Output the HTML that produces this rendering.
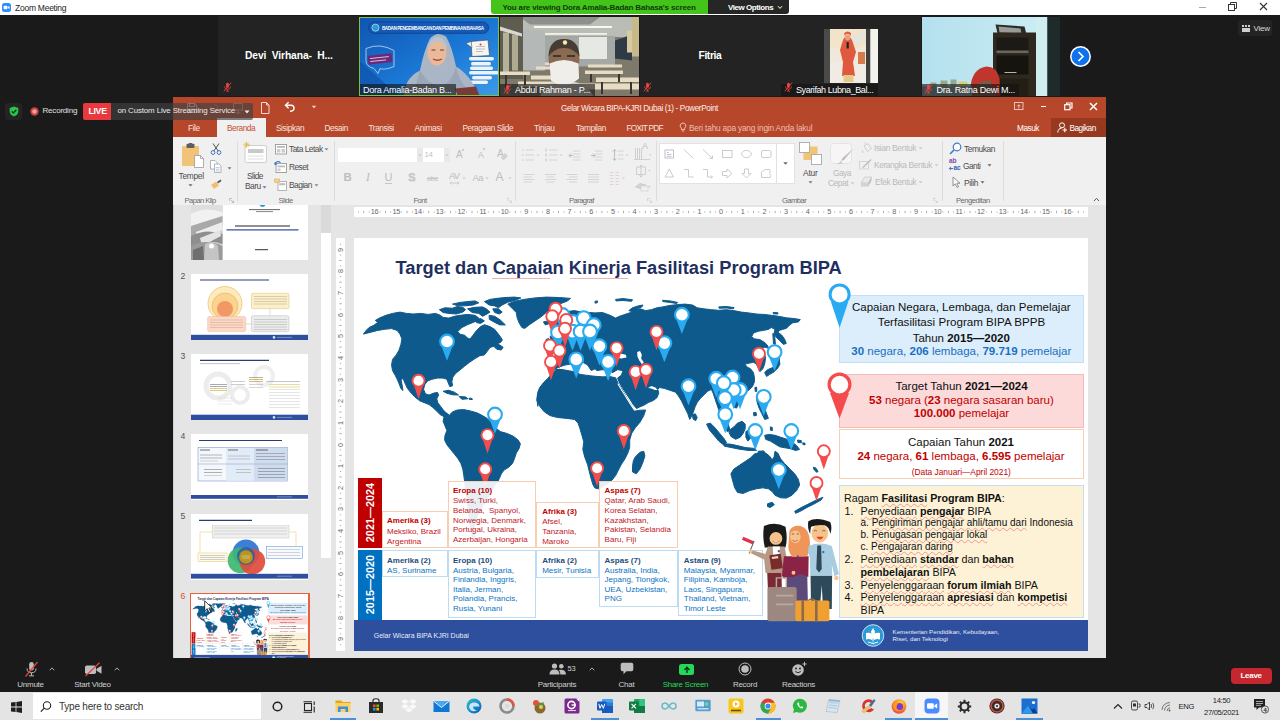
<!DOCTYPE html>
<html>
<head>
<meta charset="utf-8">
<title>Zoom Meeting</title>
<style>
*{box-sizing:border-box;margin:0;padding:0}
html,body{width:1280px;height:720px;overflow:hidden;background:#1a1a1a;font-family:"Liberation Sans",sans-serif;}
.abs{position:absolute}
#root{position:relative;width:1280px;height:720px;overflow:hidden;background:#1a1a1a}
.t{position:absolute;white-space:nowrap;line-height:1}
/* title bar */
#titlebar{left:0;top:0;width:1280px;height:15px;background:#fff}
/* tiles */
.tile{position:absolute;top:16px;height:80px;background:#232323;overflow:hidden}
.tname{position:absolute;color:#fff;font-weight:bold;font-size:10.300px;letter-spacing:-.12px;white-space:nowrap;line-height:1}
.tlabel{position:absolute;left:0;bottom:.5px;height:12px;background:rgba(20,20,20,.62);color:#fff;font-size:9px;line-height:12.500px;padding:0 0 0 15px;white-space:nowrap;letter-spacing:-.25px;overflow:hidden}
/* ppt */
#ppt{left:173px;top:97px;width:933px;height:561px;background:#e6e6e6;overflow:hidden}
#ppttitle{left:0;top:0;width:933px;height:21px;background:#b7472a}
#ppttabs{left:0;top:21px;width:933px;height:19px;background:#b7472a}
#ribbon{left:0;top:40px;width:933px;height:69px;background:#f3f3f3;border-bottom:1px solid #d6d6d6}
.tab{position:absolute;top:0;height:19px;line-height:21px;color:#f6e3de;font-size:8.3px;white-space:nowrap;letter-spacing:-.035em}
.rl{position:absolute;font-size:8.3px;color:#4c4c4c;white-space:nowrap;line-height:1;letter-spacing:-.05em}
.rd{color:#b9b9b9}
.sep{position:absolute;top:141px;width:1px;height:60px;background:#dcdcdc}
.rg{position:absolute;top:197px;font-size:7.6px;color:#6a6a6a;white-space:nowrap;line-height:1;letter-spacing:-.035em}

.rn{position:absolute;top:208px;width:12px;text-align:center;font-size:7.3px;color:#6a6a6a;line-height:8px;letter-spacing:-.04em}
.vn{position:absolute;left:334.5px;width:12px;height:12px;text-align:center;font-size:7.3px;color:#6a6a6a;line-height:12px;transform:rotate(-90deg);letter-spacing:-.04em}
.tn{position:absolute;left:180.5px;font-size:8.6px;color:#555;line-height:1}
.th{position:absolute;left:191px;width:117px;height:66px;background:#fff;overflow:hidden}
.sq{text-decoration:underline wavy rgba(235,90,90,.55);text-decoration-thickness:.5px;text-underline-offset:1.2px;text-decoration-skip-ink:none}
/* zoom toolbar */
#ztb{left:0;top:658px;width:1280px;height:34px;background:#1a1a1a}
.zl{position:absolute;top:22.500px;font-size:8px;color:#cfcfcf;white-space:nowrap;line-height:1;text-align:center;letter-spacing:-.28px}
/* taskbar */
#taskbar{left:0;top:692px;width:1280px;height:28px;background:#e4e4e4}
</style>
</head>
<body>
<div id="root">

<!-- ===== title bar ===== -->
<div id="titlebar" class="abs">
  <svg class="abs" style="left:2px;top:3px" width="9" height="9" viewBox="0 0 9 9"><rect width="9" height="9" rx="2.5" fill="#2d8cff"/><rect x="1.6" y="2.8" width="3.8" height="3.4" rx=".8" fill="#fff"/><path d="M5.8 4 L7.5 2.9 V6.1 L5.8 5Z" fill="#fff"/></svg>
  <div class="t" style="left:15px;top:4px;font-size:8.500px;color:#222;letter-spacing:-.25px">Zoom Meeting</div>
  <div class="abs" style="left:491px;top:0;width:217px;height:14px;background:#44c31a;border-radius:0 0 0 3px"></div>
  <div class="t" style="left:502.500px;top:3.500px;font-size:8px;font-weight:bold;color:#0e3d0a;letter-spacing:-.16px">You are viewing Dora Amalia-Badan Bahasa's screen</div>
  <div class="abs" style="left:708px;top:0;width:81px;height:14px;background:#262626;border-radius:0 0 3px 0"></div>
  <div class="t" style="left:728px;top:3.500px;font-size:8px;font-weight:bold;color:#fff;letter-spacing:-.45px">View Options</div>
  <svg class="abs" style="left:777px;top:5px" width="6" height="5" viewBox="0 0 6 5"><path d="M1 1.2 L3 3.4 L5 1.2" fill="none" stroke="#fff" stroke-width="1"/></svg>
  <!-- window controls -->
  <div class="abs" style="left:1199px;top:6.500px;width:7px;height:1.400px;background:#a8a8a8"></div>
  <svg class="abs" style="left:1228px;top:2px" width="9" height="9" viewBox="0 0 9 9"><rect x=".5" y="2.5" width="6" height="6" fill="none" stroke="#333" stroke-width="1"/><path d="M2.5 2.5 V.5 H8.5 V6.5 H6.5" fill="none" stroke="#333" stroke-width="1"/></svg>
  <svg class="abs" style="left:1259px;top:2px" width="9" height="9" viewBox="0 0 9 9"><path d="M1 1 L8 8 M8 1 L1 8" stroke="#333" stroke-width="1.1"/></svg>
</div>

<!-- ===== video strip ===== -->
<div id="tiles">
  <div class="tile" style="left:218px;width:140.500px">
    <div class="tname" style="left:27px;top:50.500px;top:34.500px">Devi&nbsp; Virhana-&nbsp; H...</div>
    <svg class="abs" style="left:5px;top:66px" width="9" height="10" viewBox="0 0 9 10"><rect x="3" y=".8" width="3" height="5" rx="1.500" fill="#e8433f"/><path d="M1.500 4.500 Q1.500 7.300 4.500 7.300 Q7.500 7.300 7.500 4.500 M4.500 7.300 V9 M3 9.200 H6" fill="none" stroke="#e8433f" stroke-width=".8"/><path d="M.8 9.300 L8.200 .7" stroke="#e8433f" stroke-width=".9"/></svg>
  </div>
  <div class="tile" id="tile2" style="left:359px;width:140px;top:16.500px;height:79.500px;background:#1766c2">
    <svg class="abs" style="left:0;top:0" width="140" height="80" viewBox="359 16.500 140 80">
      <defs><linearGradient id="tg2" x1="0" y1="0" x2="1" y2="1"><stop offset="0" stop-color="#0f55b0"/><stop offset=".55" stop-color="#1b78d6"/><stop offset="1" stop-color="#3e9be8"/></linearGradient></defs>
      <rect x="359" y="16.500" width="140" height="80" fill="url(#tg2)"/>
      <path d="M359 60 L400 96 H359Z" fill="#0d4ea6" opacity=".6"/>
      <rect x="368.600" y="21.500" width="120" height="11.300" rx="5.600" fill="#1559b4" stroke="#0c3f8e" stroke-width=".8"/>
      <circle cx="375.500" cy="27.200" r="3.600" fill="#2b9bd8" stroke="#fff" stroke-width=".5"/>
      <text x="382" y="29" font-family="Liberation Sans" font-weight="bold" font-size="4.600" fill="#fff" textLength="102">BADAN PENGEMBANGAN DAN PEMBINAAN BAHASA</text>
      <!-- left bubble -->
      <path d="M366 48 Q380 42 394 50 L394 66 Q384 70 380 68 L378 73 L374 68 Q366 66 366 60Z" fill="none" stroke="#dfe8f5" stroke-width=".7"/>
      <rect x="368" y="54" width="24" height="9" rx="1" fill="#6a2a7a" transform="rotate(-6 380 58)"/>
      <path d="M370 57 H389 M370 60 H386" stroke="#f3d9f5" stroke-width=".8" transform="rotate(-6 380 58)"/>
      <!-- right paper + pills -->
      <path d="M471 41 L488 39.500 L489.500 55 L472 56Z" fill="#f4f4f4" stroke="#444" stroke-width=".6"/>
      <path d="M466 43 L471 41 L472 47Z" fill="#eee" stroke="#444" stroke-width=".4"/>
      <path d="M476 46 H485 M476 48.500 H485 M476 51 H483" stroke="#999" stroke-width=".6"/>
      <circle cx="480.500" cy="44" r="1" fill="#d33"/>
      <g fill="#eef3fa"><rect x="469" y="56.500" width="25" height="3.600" rx="1.800"/><rect x="471" y="61.500" width="20" height="3.400" rx="1.700"/><rect x="470" y="66" width="23" height="3.400" rx="1.700"/><rect x="469" y="70.500" width="30" height="3.600" rx="1.800"/><rect x="472" y="75.500" width="20" height="3.400" rx="1.700"/><rect x="470" y="80" width="18" height="3.400" rx="1.700"/></g>
      <!-- person -->
      <path d="M404 96.500 Q404 78 420 70 Q424 50 430 38 Q437 30 446 36 Q452 46 456 66 Q470 74 480 96.500Z" fill="#aab6c6"/>
      <path d="M420 70 Q428 84 440 86 Q452 82 456 66 Q458 80 470 92 L476 96.500 H412 Z" fill="#9aa7b9"/>
      <ellipse cx="437" cy="52" rx="9.600" ry="13" fill="#e9b99a"/>
      <path d="M427 50 Q429 37 437.500 36.500 Q446 37 447.500 50 Q443 41 437.500 41 Q432 41 427 50Z" fill="#b9c3d0"/>
      <path d="M433 58.500 Q437.500 61 442 58.500" fill="none" stroke="#a8443f" stroke-width="1.300"/>
      <path d="M431.500 49.500 h4 M440 49.500 h4" stroke="#4a3a33" stroke-width=".9"/>
      <path d="M455 88 L476 86 L480 96.500 H458Z" fill="#7a3a3a"/>
    </svg>
    <div class="tlabel" style="width:97px;padding-left:4px">Dora Amalia-Badan B...</div>
    <div class="abs" style="left:0;top:0;width:140px;height:79.500px;border:1px solid #7dc242"></div>
  </div>
  <div class="tile" id="tile3" style="left:500px;width:139px;top:16.500px;height:79.500px;background:#8a8576">
    <svg class="abs" style="left:0;top:0" width="139" height="80" viewBox="500 16.500 139 80">
      <rect x="500" y="16.500" width="139" height="80" fill="#7d7a6c"/>
      <path d="M500 16.500 H639 V38 L610 36 H548 L522 34 V16.500Z" fill="#b9bdb6"/>
      <path d="M520 16.500 H600 L590 24 H530Z" fill="#8c918d"/>
      <rect x="500" y="16.500" width="23" height="62" fill="#5f5d50"/>
      <rect x="503" y="32" width="6" height="40" fill="#b5b29a"/><rect x="512" y="34" width="6" height="36" fill="#aeab92"/>
      <path d="M500 26 L522 33 V36 L500 30Z" fill="#d8d8d0"/>
      <rect x="523" y="30" width="22" height="40" fill="#b4b8b6"/>
      <rect x="545" y="36" width="70" height="30" fill="#a4a9a6"/>
      <rect x="534" y="25.500" width="78" height="2" fill="#f8f8f2"/><rect x="545" y="32.500" width="62" height="1.800" fill="#f2f2ea"/>
      <rect x="579" y="36.500" width="28" height="22" fill="#e6e8e4"/>
      <path d="M615 40 L632 34 V60 L615 58Z" fill="#2e3b46"/>
      <path d="M632 16.500 H639 V56 H632Z" fill="#c8b98a"/>
      <rect x="627" y="30" width="5" height="22" fill="#d9c9a0"/>
      <g fill="#e8dcc4"><rect x="500" y="71" width="30" height="3.500"/><rect x="531" y="75" width="34" height="4"/><rect x="518" y="81" width="40" height="5"/><rect x="536" y="66" width="28" height="3"/><rect x="585" y="70" width="38" height="3.500"/><rect x="596" y="77" width="43" height="4.500"/><rect x="580" y="83" width="59" height="6"/><rect x="545" y="62" width="25" height="2.500"/><rect x="588" y="64" width="34" height="3"/></g>
      <g fill="#3a3530"><rect x="505" y="74.500" width="2" height="12"/><rect x="524" y="74.500" width="2" height="10"/><rect x="601" y="81.500" width="2" height="12"/><rect x="630" y="81.500" width="2" height="12"/><rect x="590" y="73.500" width="2" height="8"/><rect x="618" y="73.500" width="2" height="8"/></g>
      <path d="M540 96.500 Q543 84 556 81 H574 Q588 84 594 96.500Z" fill="#cfccc3"/>
      <ellipse cx="564" cy="58" rx="15.500" ry="19" fill="#8a6a52"/>
      <path d="M548.500 56 Q549 38.500 564 38.500 Q579 38.500 579.500 56 Q573 47 564 47.500 Q555 47 548.500 56Z" fill="#463c33"/>
      <path d="M549.500 63 Q564 56 578.500 63 L579 78 Q565 90 551 80Z" fill="#efeeea"/>
      <path d="M553 55.500 h8 M567 55.500 h8" stroke="#2a2420" stroke-width="1.400"/>
      <circle cx="565" cy="42" r="2.200" fill="#f6e8b0"/>
    </svg>
    <div class="tlabel" style="width:95px">Abdul Rahman - P...</div>
    <svg class="abs" style="left:2.5px;top:67.5px" width="9" height="10" viewBox="0 0 9 10"><rect x="3" y=".8" width="3" height="5" rx="1.500" fill="#e8433f"/><path d="M1.500 4.500 Q1.500 7.300 4.500 7.300 Q7.500 7.300 7.500 4.500 M4.500 7.300 V9 M3 9.200 H6" fill="none" stroke="#e8433f" stroke-width=".8"/><path d="M.8 9.300 L8.200 .7" stroke="#e8433f" stroke-width=".9"/></svg>
  </div>
  <div class="tile" style="left:640px;width:140.500px">
    <div class="tname" style="left:58.500px;top:34.500px;letter-spacing:-.4px">Fitria</div>
    <svg class="abs" style="left:3px;top:66px" width="9" height="10" viewBox="0 0 9 10"><rect x="3" y=".8" width="3" height="5" rx="1.500" fill="#e8433f"/><path d="M1.500 4.500 Q1.500 7.300 4.500 7.300 Q7.500 7.300 7.500 4.500 M4.500 7.300 V9 M3 9.200 H6" fill="none" stroke="#e8433f" stroke-width=".8"/><path d="M.8 9.300 L8.200 .7" stroke="#e8433f" stroke-width=".9"/></svg>
  </div>
  <div class="tile" id="tile5" style="left:781px;width:139.500px">
    <svg class="abs" style="left:43px;top:13px" width="54" height="54" viewBox="824 29 54 54">
      <rect x="824" y="29" width="54" height="54" fill="#efe9dc"/>
      <rect x="824" y="29" width="6" height="54" fill="#4a4a48"/><rect x="866" y="29" width="4.500" height="54" fill="#3e3e3c"/><rect x="870.500" y="29" width="7.500" height="54" fill="#f4f2ec"/>
      <path d="M830 29 H866 V45 L848 52 L830 46Z" fill="#f1e4c8"/>
      <path d="M850 36 L866 30 V42 L852 46Z" fill="#e9e4da"/>
      <rect x="830" y="62" width="36" height="21" fill="#f0ece4"/>
      <rect x="858" y="52" width="7" height="12" fill="#d97a4a"/>
      <path d="M843 40 Q847 32 852 40 L856 52 L853 62 L855 76 H842 L843 62 L840 50Z" fill="#e0583e"/>
      <ellipse cx="847.600" cy="37.500" rx="2.600" ry="3" fill="#e9a080"/>
      <path d="M844.500 36 Q847.600 31.500 850.700 36 L851 33 Q847.600 30 844.300 33Z" fill="#e0583e"/>
      <rect x="846.600" y="42" width="2.200" height="6.500" rx=".6" fill="#222"/>
      <rect x="843.500" y="75" width="10" height="7" fill="#e6c88a"/>
    </svg>
    <div class="tlabel" style="width:97px;letter-spacing:-.42px">Syarifah Lubna_Bal...</div>
    <svg class="abs" style="left:3px;top:66px" width="9" height="10" viewBox="0 0 9 10"><rect x="3" y=".8" width="3" height="5" rx="1.500" fill="#e8433f"/><path d="M1.500 4.500 Q1.500 7.300 4.500 7.300 Q7.500 7.300 7.500 4.500 M4.500 7.300 V9 M3 9.200 H6" fill="none" stroke="#e8433f" stroke-width=".8"/><path d="M.8 9.300 L8.200 .7" stroke="#e8433f" stroke-width=".9"/></svg>
  </div>
  <div class="tile" id="tile6" style="left:921.500px;width:138.500px;top:16.500px;height:79.500px;background:#1b2626">
    <svg class="abs" style="left:0;top:0" width="139" height="80" viewBox="921.500 16.500 139 80">
      <defs><linearGradient id="tg6" x1="0" y1="0" x2="1" y2="0"><stop offset="0" stop-color="#b4e0ee"/><stop offset="1" stop-color="#c8ecf2"/></linearGradient></defs>
      <rect x="921.500" y="16.500" width="114" height="80" fill="url(#tg6)"/>
      <rect x="1035.500" y="16.500" width="11.500" height="80" fill="#cfeef0"/>
      <rect x="1047" y="16.500" width="14" height="80" fill="#1d2b2a"/>
      <path d="M995 24 L1024 26 L1026 34 L997 33Z" fill="#2a2a28"/><path d="M998 26 L1020 28 L1021 33 L999 32Z" fill="#9a9a96"/>
      <rect x="992.500" y="32" width="43" height="64.500" fill="#2f281e"/>
      <rect x="996" y="37" width="32" height="14" fill="#1c1a16"/><path d="M996 50 H1028 V52.500 H996Z" fill="#6a665c"/>
      <rect x="996" y="55" width="32" height="19" fill="#15140f"/><path d="M1004 72 h12" stroke="#ddd" stroke-width=".8"/>
      <rect x="996" y="78" width="32" height="18" fill="#241e16"/>
      <path d="M970 86 Q972 68 986 66 Q996 66 999 78 L1000 96.500 H972Z" fill="#c0362c"/>
      <path d="M972 90 Q980 78 990 80 L996 96.500 H972Z" fill="#7a5a48"/>
      <g fill="#9aa88a"><rect x="930" y="82" width="6" height="5"/><rect x="940" y="80" width="7" height="7"/><rect x="950" y="79" width="6" height="8"/><rect x="958" y="81" width="9" height="6" fill="#d6cf7a"/></g>
      <rect x="921.500" y="86" width="50" height="10.500" fill="#8aa0a0"/>
    </svg>
    <div class="tlabel" style="width:97px">Dra. Ratna Dewi M...</div>
    <svg class="abs" style="left:2.5px;top:67.5px" width="9" height="10" viewBox="0 0 9 10"><rect x="3" y=".8" width="3" height="5" rx="1.500" fill="#e8433f"/><path d="M1.500 4.500 Q1.500 7.300 4.500 7.300 Q7.500 7.300 7.500 4.500 M4.500 7.300 V9 M3 9.200 H6" fill="none" stroke="#e8433f" stroke-width=".8"/><path d="M.8 9.300 L8.200 .7" stroke="#e8433f" stroke-width=".9"/></svg>
  </div>
  <!-- next arrow -->
  <svg class="abs" style="left:1070px;top:45.500px" width="21" height="21" viewBox="0 0 21 21"><circle cx="10.500" cy="10.500" r="9.700" fill="#0e72ed" stroke="#fff" stroke-width="1.500"/><path d="M8.500 6 L13 10.500 L8.500 15" fill="none" stroke="#fff" stroke-width="1.700"/></svg>
  <!-- View button -->
  <div class="abs" style="left:1238px;top:20px;width:34px;height:16px;background:#242424;border-radius:3px"></div>
  <svg class="abs" style="left:1242px;top:24.500px" width="8" height="7" viewBox="0 0 8 7"><g fill="#cfcfcf"><rect x="0" y="0" width="2" height="2"/><rect x="3" y="0" width="2" height="2"/><rect x="6" y="0" width="2" height="2"/><rect x="0" y="3" width="8" height="4"/></g></svg>
  <div class="t" style="left:1253.500px;top:24.500px;font-size:8px;color:#d8d8d8;letter-spacing:-.2px">View</div>
</div>

<!-- ===== zoom overlay: recording / live ===== -->
<div class="abs" style="left:5px;top:102.500px;width:16.500px;height:17px;background:#242424;border-radius:3px"></div>
<svg class="abs" style="left:8.500px;top:105.500px" width="10" height="11" viewBox="0 0 10 11"><path d="M5 .5 L9.300 2 V5.500 Q9.300 8.800 5 10.500 Q.7 8.800 .7 5.500 V2Z" fill="#27c64a"/><path d="M2.800 5.400 L4.400 7 L7.300 3.800" fill="none" stroke="#1a1a1a" stroke-width="1.200"/></svg>
<svg class="abs" style="left:30px;top:106.500px" width="9" height="9" viewBox="0 0 9 9"><circle cx="4.500" cy="4.500" r="4.200" fill="#c9403c"/><circle cx="4.500" cy="4.500" r="2.300" fill="#f0a09c"/></svg>
<div class="t" style="left:42.500px;top:107px;font-size:8px;color:#e0e0e0;letter-spacing:-.2px">Recording</div>

<!-- ===== powerpoint window ===== -->
<div id="ppt" class="abs">
  <div id="pc" class="abs" style="left:-173px;top:-97px;width:1280px;height:720px">
  <div class="abs" style="left:173px;top:97px;width:933px;height:40px;background:#b7472a"></div>
  <div class="abs" style="left:173px;top:137px;width:933px;height:68px;background:#f1f0f1"></div>
  
  <!-- quick access toolbar -->
  <svg class="abs" style="left:186px;top:101px" width="60" height="14" viewBox="0 0 60 14">
    <g fill="none" stroke="#f3d9d2" stroke-width="1">
      <path d="M1.5 2.5 H9 L10.5 4 V11.5 H1.5Z"/><rect x="3.5" y="2.5" width="5" height="3"/><rect x="3.5" y="8" width="5" height="3.5"/>
      <path d="M28 3.5 a4 4 0 1 1 -3 1.2" stroke="#c98674"/>
      <rect x="47.5" y="2.5" width="9" height="6.5" stroke="#d9a596"/><path d="M52 9 V12 M49.5 12 H54.5" stroke="#d9a596"/>
    </g>
  </svg>
  <svg class="abs" style="left:260px;top:101px" width="12" height="14" viewBox="0 0 12 14"><path d="M1.5 1.5 H6.5 L9 4 V12.5 H1.5Z M6.5 1.5 V4 H9" fill="none" stroke="#f3d9d2" stroke-width="1"/></svg>
  <svg class="abs" style="left:284px;top:101px" width="12" height="12" viewBox="0 0 12 12"><path d="M2 4.2 H7 a3 3 0 0 1 0 6 H6" fill="none" stroke="#fff" stroke-width="1.4"/><path d="M4.6 1.2 L1.5 4.2 L4.6 7.2" fill="none" stroke="#fff" stroke-width="1.4"/></svg>
  <svg class="abs" style="left:311px;top:105px" width="6" height="4" viewBox="0 0 6 4"><path d="M.8 .8 L3 3.2 L5.2 .8Z" fill="#f3d9d2"/></svg>
  <div class="t" style="left:561px;top:105px;font-size:8.2px;color:#fbeee9;letter-spacing:-.37px">Gelar Wicara BIPA-KJRI Dubai (1) - PowerPoint</div>
  <!-- window controls -->
  <svg class="abs" style="left:1014px;top:102px" width="10" height="9" viewBox="0 0 10 9"><rect x=".5" y=".5" width="8.5" height="7" fill="none" stroke="#e9c3b8" stroke-width="1"/><path d="M4.8 6.5 V3 M3.2 4.3 L4.8 2.7 L6.4 4.3" fill="none" stroke="#e9c3b8" stroke-width="1"/></svg>
  <div class="abs" style="left:1041px;top:106px;width:5px;height:1.4px;background:#fff"></div>
  <svg class="abs" style="left:1064px;top:102px" width="9" height="9" viewBox="0 0 9 9"><rect x=".7" y="2.7" width="5.3" height="5" fill="none" stroke="#fff" stroke-width="1.2"/><path d="M2.6 2.6 V1 H8 V6 H6.2" fill="none" stroke="#fff" stroke-width="1.2"/></svg>
  <svg class="abs" style="left:1089px;top:102px" width="9" height="9" viewBox="0 0 9 9"><path d="M1 1 L8 8 M8 1 L1 8" stroke="#fff" stroke-width="1.5"/></svg>

  
  <div class="abs" style="left:217px;top:118px;width:49px;height:19px;background:#f1f0f1"></div>
  <div class="abs" style="left:1051px;top:118px;width:55px;height:19px;background:#96391f"></div>
  <div class="tab" style="left:188px;top:118px;letter-spacing:-0.394px">File</div>
  <div class="tab" style="left:227px;top:118px;color:#c4502f;letter-spacing:-0.468px">Beranda</div>
  <div class="tab" style="left:276px;top:118px;letter-spacing:-0.409px">Sisipkan</div>
  <div class="tab" style="left:324.5px;top:118px;letter-spacing:-0.405px">Desain</div>
  <div class="tab" style="left:368.5px;top:118px;letter-spacing:-0.431px">Transisi</div>
  <div class="tab" style="left:414.5px;top:118px;letter-spacing:-0.331px">Animasi</div>
  <div class="tab" style="left:462.5px;top:118px;letter-spacing:-0.439px">Peragaan Slide</div>
  <div class="tab" style="left:534px;top:118px;letter-spacing:-0.283px">Tinjau</div>
  <div class="tab" style="left:576px;top:118px;letter-spacing:-0.402px">Tampilan</div>
  <div class="tab" style="left:626.5px;top:118px;letter-spacing:-0.765px">FOXIT PDF</div>
  <svg class="abs" style="left:679px;top:122px" width="8" height="11" viewBox="0 0 8 11"><path d="M4 1 a2.8 2.8 0 0 1 1.6 5.1 V7.6 H2.4 V6.1 A2.8 2.8 0 0 1 4 1Z M2.8 9 H5.2" fill="none" stroke="#efcfc6" stroke-width=".9"/></svg>
  <div class="tab" style="left:689px;top:118px;color:#eebfb3;letter-spacing:-0.191px">Beri tahu apa yang ingin Anda lakul</div>
  <div class="tab" style="left:1017px;top:118px;color:#fff;letter-spacing:-0.508px">Masuk</div>
  <svg class="abs" style="left:1057px;top:122px" width="11" height="11" viewBox="0 0 11 11"><circle cx="5" cy="3.3" r="2.5" fill="none" stroke="#fff" stroke-width="1"/><path d="M.8 10.5 C.8 7.5 2.5 6.3 4.5 6.3" fill="none" stroke="#fff" stroke-width="1"/><path d="M7.8 5.8 V10.2 M5.6 8 H10" stroke="#fff" stroke-width="1.1"/></svg>
  <div class="tab" style="left:1069.5px;top:118px;color:#fff;letter-spacing:-0.526px">Bagikan</div>

  
  <!-- separators -->
  <div class="sep" style="left:237px"></div><div class="sep" style="left:334px"></div><div class="sep" style="left:515px"></div><div class="sep" style="left:656px"></div><div class="sep" style="left:942px"></div><div class="sep" style="left:1003px"></div>
  <!-- group labels -->
  <div class="rg" style="left:184.5px;letter-spacing:-0.543px">Papan Klip</div>
  <div class="rg" style="left:278.5px;letter-spacing:-0.550px">Slide</div>
  <div class="rg" style="left:413.5px;letter-spacing:-0.550px">Font</div>
  <div class="rg" style="left:569px;letter-spacing:-0.550px">Paragraf</div>
  <div class="rg" style="left:782px;letter-spacing:-0.550px">Gambar</div>
  <div class="rg" style="left:956px;letter-spacing:-0.469px">Pengeditan</div>
  <!-- dialog launchers -->
  <svg class="abs" style="left:229px;top:198px" width="5" height="5" viewBox="0 0 5 5"><path d="M.5 3 V.5 H3 M2 2 L4.5 4.5 M4.5 2.6 V4.5 H2.6" fill="none" stroke="#aaa" stroke-width=".7"/></svg>
  <svg class="abs" style="left:507px;top:198px" width="5" height="5" viewBox="0 0 5 5"><path d="M.5 3 V.5 H3 M2 2 L4.5 4.5 M4.5 2.6 V4.5 H2.6" fill="none" stroke="#ccc" stroke-width=".7"/></svg>
  <svg class="abs" style="left:647px;top:198px" width="5" height="5" viewBox="0 0 5 5"><path d="M.5 3 V.5 H3 M2 2 L4.5 4.5 M4.5 2.6 V4.5 H2.6" fill="none" stroke="#ccc" stroke-width=".7"/></svg>
  <svg class="abs" style="left:933px;top:198px" width="5" height="5" viewBox="0 0 5 5"><path d="M.5 3 V.5 H3 M2 2 L4.5 4.5 M4.5 2.6 V4.5 H2.6" fill="none" stroke="#ccc" stroke-width=".7"/></svg>
  <svg class="abs" style="left:1093px;top:197px" width="7" height="5" viewBox="0 0 7 5"><path d="M1 4 L3.5 1.3 L6 4" fill="none" stroke="#555" stroke-width="1"/></svg>

  <!-- Papan Klip -->
  <svg class="abs" style="left:181px;top:143px" width="24" height="25" viewBox="0 0 24 25">
    <rect x="1" y="3" width="17" height="20" rx="1" fill="#f0c378"/><rect x="5.5" y=".8" width="8" height="4.2" rx="1" fill="#5f5f5f"/><rect x="7.6" y="0" width="3.8" height="2.4" rx="1" fill="#5f5f5f"/>
    <path d="M13.5 12.5 H19.5 L22.5 15.5 V24.5 H13.5Z" fill="#fff" stroke="#9a9a9a" stroke-width=".8"/><path d="M19.5 12.5 V15.5 H22.5" fill="none" stroke="#9a9a9a" stroke-width=".8"/>
  </svg>
  <div class="rl" style="left:178.5px;top:172px;font-size:8.4px;letter-spacing:-0.283px">Tempel</div>
  <svg class="abs" style="left:188px;top:184px" width="5" height="3" viewBox="0 0 5 3"><path d="M.5 .3 L2.5 2.6 L4.5 .3Z" fill="#666"/></svg>
  <svg class="abs" style="left:210px;top:143px" width="12" height="12" viewBox="0 0 12 12"><path d="M3 .5 L8.2 8 M9 .5 L3.8 8" stroke="#555" stroke-width="1" fill="none"/><circle cx="3" cy="9.5" r="1.9" fill="none" stroke="#3b76c4" stroke-width="1"/><circle cx="9" cy="9.5" r="1.9" fill="none" stroke="#3b76c4" stroke-width="1"/></svg>
  <svg class="abs" style="left:210px;top:160px" width="12" height="13" viewBox="0 0 12 13"><path d="M.5 .5 H5 L7 2.5 V9 H.5Z" fill="#fff" stroke="#9aa4ad" stroke-width=".8"/><path d="M4.5 4 H9 L11 6 V12.5 H4.5Z" fill="#fff" stroke="#9aa4ad" stroke-width=".8"/><path d="M5.8 7.5 H9.6 M5.8 9.2 H9.6 M5.8 10.9 H9.6" stroke="#8fa9c6" stroke-width=".6"/></svg>
  <svg class="abs" style="left:227px;top:167px" width="5" height="3" viewBox="0 0 5 3"><path d="M.5 .3 L2.5 2.6 L4.5 .3Z" fill="#777"/></svg>
  <svg class="abs" style="left:210px;top:179px" width="12" height="11" viewBox="0 0 12 11"><path d="M1 6 L6 2.5 L9 6.5 L4 10Z" fill="#eec069"/><path d="M7 3 L10.5 .6 L11.5 2 L8 4.5Z" fill="#555"/></svg>

  <!-- Slide -->
  <svg class="abs" style="left:243px;top:141px" width="25" height="24" viewBox="0 0 25 24">
    <rect x="2" y="4.5" width="21.5" height="17" rx="1.5" fill="#fdfdfd" stroke="#c9c9c9" stroke-width=".9"/><rect x="5" y="8" width="15.5" height="4" fill="#c9c9c9"/><path d="M5 15 H20.5 M5 18 H20.5" stroke="#dcdcdc" stroke-width=".9"/>
    <path d="M3.5 .5 V7 M.3 3.7 H6.8 M1.2 1.4 L5.8 6 M5.8 1.4 L1.2 6" stroke="#e9b645" stroke-width=".8"/>
  </svg>
  <div class="rl" style="left:247px;top:172px;font-size:8.4px;letter-spacing:-0.525px">Slide</div>
  <div class="rl" style="left:245px;top:181.500px;font-size:8.4px;letter-spacing:-0.550px">Baru</div>
  <svg class="abs" style="left:262px;top:186px" width="5" height="3" viewBox="0 0 5 3"><path d="M.5 .3 L2.5 2.6 L4.5 .3Z" fill="#777"/></svg>
  <svg class="abs" style="left:275px;top:144px" width="12" height="11" viewBox="0 0 12 11"><rect x=".5" y=".5" width="11" height="9.5" fill="#fff" stroke="#999" stroke-width=".9"/><rect x="2" y="2" width="8" height="1.8" fill="#bbb"/><rect x="2" y="5" width="3.3" height="3.6" fill="#ccc"/><rect x="6.5" y="5" width="3.5" height="3.6" fill="#ccc"/></svg>
  <div class="rl" style="left:289px;top:145.400px;font-size:8.4px;letter-spacing:-0.491px">Tata Letak</div>
  <svg class="abs" style="left:324px;top:148px" width="5" height="3" viewBox="0 0 5 3"><path d="M.5 .3 L2.5 2.6 L4.5 .3Z" fill="#888"/></svg>
  <svg class="abs" style="left:274px;top:160px" width="13" height="13" viewBox="0 0 13 13"><rect x="2" y="3.5" width="10.5" height="9" fill="#fff" stroke="#999" stroke-width=".9"/><rect x="3.5" y="5.5" width="7.5" height="1.8" fill="#bbb"/><rect x="3.5" y="8.5" width="3" height="2.6" fill="#ccc"/><path d="M1 4.8 C1 1.5 4.5 .8 6.5 2.6" fill="none" stroke="#3b76c4" stroke-width="1.1"/><path d="M.2 2.2 L1 5.2 L3.6 4Z" fill="#3b76c4"/></svg>
  <div class="rl" style="left:289px;top:163.400px;font-size:8.4px;letter-spacing:-0.550px">Reset</div>
  <svg class="abs" style="left:274px;top:178px" width="13" height="13" viewBox="0 0 13 13"><rect x="4" y="3.5" width="8.5" height="9" fill="#fff" stroke="#aaa" stroke-width=".9"/><rect x="5.2" y="5.2" width="6" height="2" fill="#bbb"/><path d="M.5 1 H5.5 V4.3 H.5Z" fill="#f3d48b" stroke="#dca944" stroke-width=".6"/></svg>
  <div class="rl" style="left:289px;top:181.400px;font-size:8.4px;letter-spacing:-0.550px">Bagian</div>
  <svg class="abs" style="left:314px;top:184px" width="5" height="3" viewBox="0 0 5 3"><path d="M.5 .3 L2.5 2.6 L4.5 .3Z" fill="#888"/></svg>

  
  <!-- Font group -->
  <div class="abs" style="left:338px;top:148px;width:80px;height:14px;background:#fff"></div>
  <div class="abs" style="left:417px;top:148px;width:6px;height:14px;background:#e9e9e9"></div>
  <div class="abs" style="left:423px;top:148px;width:21px;height:14px;background:#fff"></div>
  <div class="abs" style="left:444px;top:148px;width:6px;height:14px;background:#e9e9e9"></div>
  <svg class="abs" style="left:418px;top:154px" width="4" height="3" viewBox="0 0 4 3"><path d="M.3 .3 L2 2.4 L3.7 .3Z" fill="#ccc"/></svg>
  <svg class="abs" style="left:445px;top:154px" width="4" height="3" viewBox="0 0 4 3"><path d="M.3 .3 L2 2.4 L3.7 .3Z" fill="#ccc"/></svg>
  <div class="rl rd" style="left:424.5px;top:151px;font-size:8px;color:#c2c2c2">14</div>
  <div class="rl" style="left:456px;top:149.5px;font-size:10px;color:#bdbdbd">A</div><svg class="abs" style="left:461px;top:148px" width="4" height="3" viewBox="0 0 4 3"><path d="M.3 2.7 L2 .5 L3.7 2.7Z" fill="#c8c8c8"/></svg>
  <div class="rl" style="left:478px;top:150.5px;font-size:9px;color:#bdbdbd">A</div><svg class="abs" style="left:482px;top:148px" width="4" height="3" viewBox="0 0 4 3"><path d="M.3 .3 L2 2.5 L3.7 .3Z" fill="#c8c8c8"/></svg>
  <div class="rl" style="left:497px;top:148.5px;font-size:10px;color:#bdbdbd">A</div><svg class="abs" style="left:499px;top:152px" width="10" height="9" viewBox="0 0 10 9"><path d="M1.5 5.5 L6 1 L9 4 L4.5 8.5Z" fill="#d2d2d2"/></svg>
  <div class="rl" style="left:343.5px;top:172px;font-size:11.5px;font-weight:bold;color:#bcbcbc">B</div>
  <div class="rl" style="left:366px;top:172px;font-size:11.5px;font-style:italic;font-family:'Liberation Serif',serif;color:#bcbcbc">I</div>
  <div class="rl" style="left:384.5px;top:172px;font-size:11px;color:#bcbcbc;border-bottom:1px solid #c6c6c6;padding-bottom:0px;height:12px">U</div>
  <div class="rl" style="left:408px;top:172px;font-size:11.5px;font-weight:bold;color:#c4c4c4;text-shadow:.6px .6px 0 #ddd">S</div>
  <div class="rl" style="left:427px;top:175px;font-size:7.5px;color:#c4c4c4;text-decoration:line-through">abc</div>
  <div class="rl" style="left:449px;top:171px;font-size:9.5px;color:#bcbcbc;letter-spacing:-.1em">AV</div>
  <svg class="abs" style="left:449px;top:181px" width="11" height="4" viewBox="0 0 11 4"><path d="M1 2 H10 M2.5 .5 L1 2 L2.5 3.5 M8.5 .5 L10 2 L8.5 3.5" fill="none" stroke="#c4c4c4" stroke-width=".8"/></svg>
  <svg class="abs" style="left:462px;top:177px" width="4" height="3" viewBox="0 0 4 3"><path d="M.3 .3 L2 2.4 L3.7 .3Z" fill="#d0d0d0"/></svg>
  <div class="rl" style="left:472.5px;top:173px;font-size:9.5px;color:#bcbcbc">Aa</div>
  <svg class="abs" style="left:485px;top:177px" width="4" height="3" viewBox="0 0 4 3"><path d="M.3 .3 L2 2.4 L3.7 .3Z" fill="#d0d0d0"/></svg>
  <div class="rl" style="left:495.5px;top:171px;font-size:12px;color:#bcbcbc">A</div>
  <svg class="abs" style="left:508px;top:177px" width="4" height="3" viewBox="0 0 4 3"><path d="M.3 .3 L2 2.4 L3.7 .3Z" fill="#d0d0d0"/></svg>

  <!-- Paragraf group -->
  <svg class="abs" style="left:521px;top:146px" width="130" height="46" viewBox="0 0 130 46">
    <g stroke="#d4d4d4" stroke-width="1" fill="none">
      <path d="M4.5 4 H13 M4.5 9 H13 M4.5 14 H13"/><path d="M1 4 H2.5 M1 9 H2.5 M1 14 H2.5" stroke="#c4c4c4"/>
      <path d="M28 4 H36.5 M28 9 H36.5 M28 14 H36.5"/><path d="M25 2.5 V5.5 M25 7.5 V10.5 M25 12.5 V15.5" stroke="#c4c4c4"/>
      <path d="M52 5 H59.5 M52 8 H59.5 M52 11 H59.5 M52 14 H59.5"/><path d="M48 9.5 H52 M50 7.5 L48 9.5 L50 11.5" stroke="#bdbdbd"/>
      <path d="M74 5 H81.5 M74 8 H81.5 M74 11 H81.5 M74 14 H81.5"/><path d="M70 9.5 H74 M72 7.5 L74 9.5 L72 11.5" stroke="#bdbdbd"/>
      <path d="M97 5 H102.5 M97 9 H102.5 M97 13 H102.5"/><path d="M93.5 3.5 V14.5 M91.7 5.5 L93.5 3.5 L95.3 5.5 M91.7 12.500 L93.5 14.5 L95.3 12.500" stroke="#bdbdbd"/>
      <path d="M2.500 28.500 H13.500 M2.500 31 H11 M2.500 33.500 H13.500 M2.500 36 H11"/>
      <path d="M24 28.500 H35 M25.500 31 H33.500 M24 33.500 H35 M25.500 36 H33.500"/>
      <path d="M45.500 28.500 H56.500 M48 31 H56.500 M45.500 33.500 H56.500 M48 36 H56.500"/>
      <path d="M67 28.500 H78 M67 31 H78 M67 33.500 H78 M67 36 H78"/>
      <path d="M89 26.500 H92.500 M89 29.500 H92.500 M89 32.500 H92.500 M89 35.500 H92.500 M89 38.500 H92.500 M94.500 26.500 H98 M94.500 29.500 H98 M94.500 32.500 H98 M94.500 35.500 H98 M94.500 38.500 H98" stroke="#e0d3d0"/>
      <path d="M114.500 2 V13 M116.500 2 V13 M118.500 2 V13 M120.500 2 V13 M113 13.500 H129" stroke="#c8c8c8" stroke-width=".8"/>
      <rect x="115.500" y="21" width="9" height="7.500" stroke="#d0d0d0"/><path d="M120 19 V31 M118.500 20.500 L120 19 L121.500 20.500 M118.500 29.500 L120 31 L121.500 29.500" stroke="#c4c4c4" stroke-width=".8"/>
      <path d="M114.500 41 L119 37.500 L125 39 L121 43Z" fill="#d4d4d4" stroke="#c4c4c4" stroke-width=".7"/><rect x="120" y="40" width="7" height="5" fill="#f1f0f1" stroke="#d4d4d4" stroke-width=".8"/>
    </g>
    <path d="M15.500 8.500 L17 10.300 L18.500 8.500Z M38.500 8.500 L40 10.300 L41.500 8.500Z M104.500 8.500 L106 10.300 L107.500 8.500Z M101 31.500 L102.500 33.300 L104 31.500Z M128 8 L129.500 9.800 L131 8Z M127 24 L128.500 25.800 L130 24Z M127 40 L128.500 41.800 L130 40Z" fill="#d0d0d0"/>
  </svg>
  <div class="rl" style="left:642px;top:142px;font-size:9px;color:#c2c2c2">A</div>

  <!-- Gambar group -->
  <div class="abs" style="left:659px;top:143px;width:136px;height:41px;background:#fff;border:1px solid #e2e2e2"></div>
  <div class="abs" style="left:776px;top:143px;width:1px;height:41px;background:#e2e2e2"></div>
  <svg class="abs" style="left:660px;top:144px" width="116" height="39" viewBox="0 0 116 39">
    <g fill="none" stroke="#c6c6c6" stroke-width=".9">
      <rect x="5" y="6" width="8.500" height="8" stroke="#bcbcbc"/><path d="M7 8.500 H9 M7 10.500 H11.500 M7 12.300 H11.500" stroke="#9db4d4" stroke-width=".7"/>
      <path d="M24 5.500 L33.500 14.500"/>
      <path d="M43 5.500 L52.500 14.500 M52.500 11.500 V14.500 H49.500"/>
      <rect x="62.500" y="6.500" width="9.500" height="7"/>
      <ellipse cx="86.500" cy="10" rx="4.800" ry="3.600"/>
      <rect x="101.500" y="6.500" width="9.500" height="7" rx="1.500"/>
      <path d="M9.300 25 L13.500 33 H5Z"/>
      <path d="M24 25.500 H28.500 V33 H33.500"/>
      <path d="M43 25.500 H47.500 V33 H52.500 M51 31.500 L52.500 33 L51 34.500"/>
      <path d="M62.500 27.500 H67 V25 L72 29.500 L67 34 V31.500 H62.500Z"/>
      <path d="M84.500 25 H88.500 V29.500 H91 L86.500 34 L82 29.500 H84.500Z"/>
      <path d="M101.500 33.500 V28 L105 25.500 H109.500 Q111 27.500 109.500 29.500 Q111.500 31.500 110 33.500Z"/>
    </g>
  </svg>
  <svg class="abs" style="left:783px;top:162px" width="5" height="3" viewBox="0 0 5 3"><path d="M.3 .3 L2.500 2.800 L4.700 .3Z" fill="#666"/></svg>
  <svg class="abs" style="left:798px;top:141px" width="25" height="25" viewBox="0 0 25 25"><rect x="5.500" y="5.500" width="14" height="13.500" fill="#f0c573"/><rect x="1.500" y="1.500" width="10" height="10" fill="#fff" stroke="#a8a8a8" stroke-width=".9"/><rect x="13.500" y="13.500" width="10" height="10" fill="#fff" stroke="#a8a8a8" stroke-width=".9"/></svg>
  <div class="rl" style="left:803px;top:168.500px;font-size:8.400px;letter-spacing:-0.194px">Atur</div>
  <svg class="abs" style="left:808px;top:181px" width="5" height="3" viewBox="0 0 5 3"><path d="M.5 .3 L2.500 2.600 L4.500 .3Z" fill="#777"/></svg>
  <svg class="abs" style="left:829px;top:142px" width="26" height="25" viewBox="0 0 26 25"><rect x="1.500" y="1.500" width="21" height="20" rx="3" fill="#f7f5f6" stroke="#e4e4e4" stroke-width="1"/><path d="M24.500 6.500 L15 18 L12 19 L13.500 16 Z" fill="#bdbdbd"/><path d="M12 19 L8 22.500 L13.500 21.500Z" fill="#c9c9c9"/></svg>
  <div class="rl rd" style="left:833px;top:168.500px;font-size:8.400px;letter-spacing:-0.550px">Gaya</div>
  <div class="rl rd" style="left:828px;top:179px;font-size:8.400px;letter-spacing:-0.472px">Cepat</div>
  <svg class="abs" style="left:850px;top:182px" width="5" height="3" viewBox="0 0 5 3"><path d="M.5 .3 L2.500 2.600 L4.500 .3Z" fill="#ccc"/></svg>
  <svg class="abs" style="left:861px;top:142px" width="12" height="12" viewBox="0 0 12 12"><path d="M3 4 L7 1.500 L10.500 6.500 L6.500 9.500Z M5 2.500 L4 .5" fill="none" stroke="#c9c9c9" stroke-width=".9"/><path d="M1.500 8 Q0 10.500 1.500 11 Q3 10.500 1.500 8Z" fill="#ccc"/></svg>
  <div class="rl rd" style="left:874px;top:143.500px;font-size:8.400px;letter-spacing:-0.324px">Isian Bentuk</div>
  <svg class="abs" style="left:918px;top:147px" width="5" height="3" viewBox="0 0 5 3"><path d="M.5 .3 L2.500 2.600 L4.500 .3Z" fill="#ccc"/></svg>
  <svg class="abs" style="left:859px;top:158px" width="13" height="12" viewBox="0 0 13 12"><rect x=".5" y="3.500" width="9" height="7.500" fill="none" stroke="#d2d2d2" stroke-width=".9"/><path d="M3.500 9 L11.500 1 L12.500 2 L5 9.500 L3 10Z" fill="#bdbdbd"/></svg>
  <div class="rl rd" style="left:874px;top:160.500px;font-size:8.400px;letter-spacing:-0.411px">Kerangka Bentuk</div>
  <svg class="abs" style="left:934px;top:164px" width="5" height="3" viewBox="0 0 5 3"><path d="M.5 .3 L2.500 2.600 L4.500 .3Z" fill="#ccc"/></svg>
  <svg class="abs" style="left:860px;top:175px" width="13" height="13" viewBox="0 0 13 13"><path d="M1 8 L4.500 2 H11.500 L8.500 8Z" fill="#e9e9e9" stroke="#c9c9c9" stroke-width=".8"/><path d="M1 8 H8.500 V11.500 H1Z" fill="#d2d2d2"/><path d="M8.500 8 L11.500 2 V5.500 L8.500 11.500Z" fill="#bdbdbd"/></svg>
  <div class="rl rd" style="left:875px;top:178px;font-size:8.400px;letter-spacing:-0.352px">Efek Bentuk</div>
  <svg class="abs" style="left:918px;top:181px" width="5" height="3" viewBox="0 0 5 3"><path d="M.5 .3 L2.500 2.600 L4.500 .3Z" fill="#ccc"/></svg>

  <!-- Pengeditan group -->
  <svg class="abs" style="left:949px;top:142px" width="13" height="13" viewBox="0 0 13 13"><circle cx="8" cy="5" r="3.800" fill="#fff" stroke="#3d7cc9" stroke-width="1.200"/><path d="M5.200 7.800 L1 12" stroke="#3d7cc9" stroke-width="1.600"/></svg>
  <div class="rl" style="left:964px;top:144.500px;font-size:8.400px;letter-spacing:-0.441px">Temukan</div>
  <div class="rl" style="left:949px;top:158px;font-size:6.500px;color:#7d4da8;font-weight:bold;letter-spacing:0">ab</div>
  <div class="rl" style="left:953.500px;top:164.500px;font-size:6.500px;color:#2e62b0;font-weight:bold;letter-spacing:0">ac</div>
  <svg class="abs" style="left:948px;top:166px" width="6" height="5" viewBox="0 0 6 5"><path d="M5 2.500 H1.500 M3 .8 L1.300 2.500 L3 4.200" fill="none" stroke="#2e62b0" stroke-width=".9"/></svg>
  <div class="rl" style="left:963px;top:161.500px;font-size:8.400px;letter-spacing:-0.550px">Ganti</div>
  <svg class="abs" style="left:987px;top:164px" width="5" height="3" viewBox="0 0 5 3"><path d="M.5 .3 L2.500 2.600 L4.500 .3Z" fill="#666"/></svg>
  <svg class="abs" style="left:952px;top:176px" width="9" height="13" viewBox="0 0 9 13"><path d="M1 1 V10 L3.300 7.800 L5 11.500 L6.500 10.800 L4.800 7.200 H8Z" fill="#fff" stroke="#777" stroke-width=".8"/></svg>
  <div class="rl" style="left:964px;top:178.500px;font-size:8.400px;letter-spacing:-0.366px">Pilih</div>
  <svg class="abs" style="left:980px;top:181px" width="5" height="3" viewBox="0 0 5 3"><path d="M.5 .3 L2.500 2.600 L4.500 .3Z" fill="#666"/></svg>

  <!--PPT-THUMBS-HOLD-->
  
  <div class="abs" style="left:173px;top:205px;width:933px;height:453px;background:#e5e5e5"></div>
  <div class="abs" style="left:354px;top:207px;width:734px;height:10px;background:#fff"></div><svg class="abs" style="left:354px;top:207px" width="734" height="10" viewBox="0 0 734 10"><g fill="#9a9a9a"><rect x="3.96" y="4.40" width=".8" height="1.2"/><rect x="9.38" y="3.80" width=".8" height="2.4"/><rect x="14.79" y="4.40" width=".8" height="1.2"/><rect x="25.61" y="4.40" width=".8" height="1.2"/><rect x="31.03" y="3.80" width=".8" height="2.4"/><rect x="36.44" y="4.40" width=".8" height="1.2"/><rect x="47.26" y="4.40" width=".8" height="1.2"/><rect x="52.68" y="3.80" width=".8" height="2.4"/><rect x="58.09" y="4.40" width=".8" height="1.2"/><rect x="68.91" y="4.40" width=".8" height="1.2"/><rect x="74.33" y="3.80" width=".8" height="2.4"/><rect x="79.74" y="4.40" width=".8" height="1.2"/><rect x="90.56" y="4.40" width=".8" height="1.2"/><rect x="95.97" y="3.80" width=".8" height="2.4"/><rect x="101.39" y="4.40" width=".8" height="1.2"/><rect x="112.21" y="4.40" width=".8" height="1.2"/><rect x="117.62" y="3.80" width=".8" height="2.4"/><rect x="123.04" y="4.40" width=".8" height="1.2"/><rect x="133.86" y="4.40" width=".8" height="1.2"/><rect x="139.28" y="3.80" width=".8" height="2.4"/><rect x="144.69" y="4.40" width=".8" height="1.2"/><rect x="155.51" y="4.40" width=".8" height="1.2"/><rect x="160.93" y="3.80" width=".8" height="2.4"/><rect x="166.34" y="4.40" width=".8" height="1.2"/><rect x="177.16" y="4.40" width=".8" height="1.2"/><rect x="182.58" y="3.80" width=".8" height="2.4"/><rect x="187.99" y="4.40" width=".8" height="1.2"/><rect x="198.81" y="4.40" width=".8" height="1.2"/><rect x="204.22" y="3.80" width=".8" height="2.4"/><rect x="209.64" y="4.40" width=".8" height="1.2"/><rect x="220.46" y="4.40" width=".8" height="1.2"/><rect x="225.87" y="3.80" width=".8" height="2.4"/><rect x="231.29" y="4.40" width=".8" height="1.2"/><rect x="242.11" y="4.40" width=".8" height="1.2"/><rect x="247.52" y="3.80" width=".8" height="2.4"/><rect x="252.94" y="4.40" width=".8" height="1.2"/><rect x="263.76" y="4.40" width=".8" height="1.2"/><rect x="269.18" y="3.80" width=".8" height="2.4"/><rect x="274.59" y="4.40" width=".8" height="1.2"/><rect x="285.41" y="4.40" width=".8" height="1.2"/><rect x="290.83" y="3.80" width=".8" height="2.4"/><rect x="296.24" y="4.40" width=".8" height="1.2"/><rect x="307.06" y="4.40" width=".8" height="1.2"/><rect x="312.48" y="3.80" width=".8" height="2.4"/><rect x="317.89" y="4.40" width=".8" height="1.2"/><rect x="328.71" y="4.40" width=".8" height="1.2"/><rect x="334.12" y="3.80" width=".8" height="2.4"/><rect x="339.54" y="4.40" width=".8" height="1.2"/><rect x="350.36" y="4.40" width=".8" height="1.2"/><rect x="355.77" y="3.80" width=".8" height="2.4"/><rect x="361.19" y="4.40" width=".8" height="1.2"/><rect x="372.01" y="4.40" width=".8" height="1.2"/><rect x="377.43" y="3.80" width=".8" height="2.4"/><rect x="382.84" y="4.40" width=".8" height="1.2"/><rect x="393.66" y="4.40" width=".8" height="1.2"/><rect x="399.08" y="3.80" width=".8" height="2.4"/><rect x="404.49" y="4.40" width=".8" height="1.2"/><rect x="415.31" y="4.40" width=".8" height="1.2"/><rect x="420.73" y="3.80" width=".8" height="2.4"/><rect x="426.14" y="4.40" width=".8" height="1.2"/><rect x="436.96" y="4.40" width=".8" height="1.2"/><rect x="442.38" y="3.80" width=".8" height="2.4"/><rect x="447.79" y="4.40" width=".8" height="1.2"/><rect x="458.61" y="4.40" width=".8" height="1.2"/><rect x="464.02" y="3.80" width=".8" height="2.4"/><rect x="469.44" y="4.40" width=".8" height="1.2"/><rect x="480.26" y="4.40" width=".8" height="1.2"/><rect x="485.68" y="3.80" width=".8" height="2.4"/><rect x="491.09" y="4.40" width=".8" height="1.2"/><rect x="501.91" y="4.40" width=".8" height="1.2"/><rect x="507.33" y="3.80" width=".8" height="2.4"/><rect x="512.74" y="4.40" width=".8" height="1.2"/><rect x="523.56" y="4.40" width=".8" height="1.2"/><rect x="528.98" y="3.80" width=".8" height="2.4"/><rect x="534.39" y="4.40" width=".8" height="1.2"/><rect x="545.21" y="4.40" width=".8" height="1.2"/><rect x="550.62" y="3.80" width=".8" height="2.4"/><rect x="556.04" y="4.40" width=".8" height="1.2"/><rect x="566.86" y="4.40" width=".8" height="1.2"/><rect x="572.27" y="3.80" width=".8" height="2.4"/><rect x="577.69" y="4.40" width=".8" height="1.2"/><rect x="588.51" y="4.40" width=".8" height="1.2"/><rect x="593.93" y="3.80" width=".8" height="2.4"/><rect x="599.34" y="4.40" width=".8" height="1.2"/><rect x="610.16" y="4.40" width=".8" height="1.2"/><rect x="615.58" y="3.80" width=".8" height="2.4"/><rect x="620.99" y="4.40" width=".8" height="1.2"/><rect x="631.81" y="4.40" width=".8" height="1.2"/><rect x="637.23" y="3.80" width=".8" height="2.4"/><rect x="642.64" y="4.40" width=".8" height="1.2"/><rect x="653.46" y="4.40" width=".8" height="1.2"/><rect x="658.88" y="3.80" width=".8" height="2.4"/><rect x="664.29" y="4.40" width=".8" height="1.2"/><rect x="675.11" y="4.40" width=".8" height="1.2"/><rect x="680.52" y="3.80" width=".8" height="2.4"/><rect x="685.94" y="4.40" width=".8" height="1.2"/><rect x="696.76" y="4.40" width=".8" height="1.2"/><rect x="702.18" y="3.80" width=".8" height="2.4"/><rect x="707.59" y="4.40" width=".8" height="1.2"/><rect x="718.41" y="4.40" width=".8" height="1.2"/><rect x="723.82" y="3.80" width=".8" height="2.4"/><rect x="729.24" y="4.40" width=".8" height="1.2"/></g></svg><div class="rn" style="left:368.6px">16</div><div class="rn" style="left:390.2px">15</div><div class="rn" style="left:411.9px">14</div><div class="rn" style="left:433.6px">13</div><div class="rn" style="left:455.2px">12</div><div class="rn" style="left:476.9px">11</div><div class="rn" style="left:498.5px">10</div><div class="rn" style="left:520.1px">9</div><div class="rn" style="left:541.8px">8</div><div class="rn" style="left:563.5px">7</div><div class="rn" style="left:585.1px">6</div><div class="rn" style="left:606.8px">5</div><div class="rn" style="left:628.4px">4</div><div class="rn" style="left:650.0px">3</div><div class="rn" style="left:671.7px">2</div><div class="rn" style="left:693.4px">1</div><div class="rn" style="left:715.0px">0</div><div class="rn" style="left:736.6px">1</div><div class="rn" style="left:758.3px">2</div><div class="rn" style="left:780.0px">3</div><div class="rn" style="left:801.6px">4</div><div class="rn" style="left:823.2px">5</div><div class="rn" style="left:844.9px">6</div><div class="rn" style="left:866.5px">7</div><div class="rn" style="left:888.2px">8</div><div class="rn" style="left:909.9px">9</div><div class="rn" style="left:931.5px">10</div><div class="rn" style="left:953.1px">11</div><div class="rn" style="left:974.8px">12</div><div class="rn" style="left:996.5px">13</div><div class="rn" style="left:1018.1px">14</div><div class="rn" style="left:1039.8px">15</div><div class="rn" style="left:1061.4px">16</div>
  <div class="abs" style="left:336px;top:238px;width:9px;height:413px;background:#fff"></div><svg class="abs" style="left:336px;top:238px" width="9" height="413" viewBox="0 0 9 413"><g fill="#9a9a9a"><rect x="3.90" y="5.84" width="1.2" height=".8"/><rect x="3.90" y="16.66" width="1.2" height=".8"/><rect x="3.30" y="22.08" width="2.4" height=".8"/><rect x="3.90" y="27.49" width="1.2" height=".8"/><rect x="3.90" y="38.31" width="1.2" height=".8"/><rect x="3.30" y="43.73" width="2.4" height=".8"/><rect x="3.90" y="49.14" width="1.2" height=".8"/><rect x="3.90" y="59.96" width="1.2" height=".8"/><rect x="3.30" y="65.37" width="2.4" height=".8"/><rect x="3.90" y="70.79" width="1.2" height=".8"/><rect x="3.90" y="81.61" width="1.2" height=".8"/><rect x="3.30" y="87.03" width="2.4" height=".8"/><rect x="3.90" y="92.44" width="1.2" height=".8"/><rect x="3.90" y="103.26" width="1.2" height=".8"/><rect x="3.30" y="108.67" width="2.4" height=".8"/><rect x="3.90" y="114.09" width="1.2" height=".8"/><rect x="3.90" y="124.91" width="1.2" height=".8"/><rect x="3.30" y="130.33" width="2.4" height=".8"/><rect x="3.90" y="135.74" width="1.2" height=".8"/><rect x="3.90" y="146.56" width="1.2" height=".8"/><rect x="3.30" y="151.97" width="2.4" height=".8"/><rect x="3.90" y="157.39" width="1.2" height=".8"/><rect x="3.90" y="168.21" width="1.2" height=".8"/><rect x="3.30" y="173.62" width="2.4" height=".8"/><rect x="3.90" y="179.04" width="1.2" height=".8"/><rect x="3.90" y="189.86" width="1.2" height=".8"/><rect x="3.30" y="195.28" width="2.4" height=".8"/><rect x="3.90" y="200.69" width="1.2" height=".8"/><rect x="3.90" y="211.51" width="1.2" height=".8"/><rect x="3.30" y="216.92" width="2.4" height=".8"/><rect x="3.90" y="222.34" width="1.2" height=".8"/><rect x="3.90" y="233.16" width="1.2" height=".8"/><rect x="3.30" y="238.58" width="2.4" height=".8"/><rect x="3.90" y="243.99" width="1.2" height=".8"/><rect x="3.90" y="254.81" width="1.2" height=".8"/><rect x="3.30" y="260.23" width="2.4" height=".8"/><rect x="3.90" y="265.64" width="1.2" height=".8"/><rect x="3.90" y="276.46" width="1.2" height=".8"/><rect x="3.30" y="281.88" width="2.4" height=".8"/><rect x="3.90" y="287.29" width="1.2" height=".8"/><rect x="3.90" y="298.11" width="1.2" height=".8"/><rect x="3.30" y="303.52" width="2.4" height=".8"/><rect x="3.90" y="308.94" width="1.2" height=".8"/><rect x="3.90" y="319.76" width="1.2" height=".8"/><rect x="3.30" y="325.18" width="2.4" height=".8"/><rect x="3.90" y="330.59" width="1.2" height=".8"/><rect x="3.90" y="341.41" width="1.2" height=".8"/><rect x="3.30" y="346.83" width="2.4" height=".8"/><rect x="3.90" y="352.24" width="1.2" height=".8"/><rect x="3.90" y="363.06" width="1.2" height=".8"/><rect x="3.30" y="368.48" width="2.4" height=".8"/><rect x="3.90" y="373.89" width="1.2" height=".8"/><rect x="3.90" y="384.71" width="1.2" height=".8"/><rect x="3.30" y="390.12" width="2.4" height=".8"/><rect x="3.90" y="395.54" width="1.2" height=".8"/><rect x="3.90" y="406.36" width="1.2" height=".8"/></g></svg><div class="vn" style="top:243.7px">9</div><div class="vn" style="top:265.3px">8</div><div class="vn" style="top:287.0px">7</div><div class="vn" style="top:308.6px">6</div><div class="vn" style="top:330.2px">5</div><div class="vn" style="top:351.9px">4</div><div class="vn" style="top:373.6px">3</div><div class="vn" style="top:395.2px">2</div><div class="vn" style="top:416.9px">1</div><div class="vn" style="top:438.5px">0</div><div class="vn" style="top:460.1px">1</div><div class="vn" style="top:481.8px">2</div><div class="vn" style="top:503.4px">3</div><div class="vn" style="top:525.1px">4</div><div class="vn" style="top:546.8px">5</div><div class="vn" style="top:568.4px">6</div><div class="vn" style="top:590.0px">7</div><div class="vn" style="top:611.7px">8</div><div class="vn" style="top:633.4px">9</div>
  <div id="slide" class="abs" style="left:354px;top:238px;width:734px;height:413px;background:#fff;overflow:hidden">
    <div id="sc" class="abs" style="left:-354px;top:-238px;width:1280px;height:720px">
    <!--MAP-START--><svg class="abs" style="left:0;top:0" width="1280" height="720" viewBox="0 0 1280 720"><path d="M363.4 334.1 366.3 330.3 369.1 327.5 373.8 325.3 377.9 322.3 375.3 320.4 379.4 318.1 385.9 315.3 392.5 313.4 400.0 312.1 406.6 313.4 413.1 314.0 420.6 313.4 428.1 314.4 435.6 313.4 440.3 315.3 443.1 317.4 448.8 318.1 454.4 316.3 460.0 315.3 467.5 314.4 475.0 315.3 478.8 318.1 476.9 320.9 472.2 322.8 467.5 324.7 461.9 327.5 457.8 331.6 460.0 334.3 464.7 335.2 467.5 338.0 470.1 339.1 472.8 335.4 476.5 330.5 480.3 326.8 484.4 324.7 490.0 326.6 494.7 329.4 498.4 334.1 500.5 336.9 502.4 339.9 500.5 342.5 497.5 343.6 503.1 347.2 501.3 350.0 496.8 349.3 493.8 346.3 490.0 347.4 487.4 351.1 484.4 354.9 479.7 355.8 475.0 358.6 469.4 362.4 464.7 366.1 460.0 369.9 455.5 373.6 452.7 377.4 451.8 381.9 452.7 385.6 449.9 386.8 448.0 382.3 446.9 379.3 443.1 378.1 437.5 378.1 431.9 379.3 427.4 381.1 424.6 384.9 423.6 389.4 425.5 393.9 429.1 395.0 433.8 393.1 437.5 392.4 438.6 395.0 436.8 398.8 437.7 402.5 440.5 406.3 443.3 410.0 446.1 412.8 448.8 414.7 448.2 417.1 444.3 416.8 440.3 414.7 436.6 411.1 432.8 407.4 429.1 404.6 424.4 402.7 419.7 400.8 415.0 397.1 411.3 393.3 407.5 388.6 404.9 383.0 403.0 378.3 401.1 380.2 402.1 384.9 403.0 390.5 400.9 388.6 399.1 383.8 397.2 379.3 395.3 375.5 392.5 370.6 391.6 365.0 392.5 359.4 396.3 354.9 399.1 350.0 400.9 344.4 401.9 338.8 400.0 334.3 397.2 330.5 391.6 328.6 385.0 329.2 377.5 330.5 370.0 332.4ZM444.1 416.6 447.8 417.5 449.7 414.7 452.5 411.9 457.2 410.0 463.8 409.6 470.3 410.9 476.9 412.8 482.5 415.6 487.2 418.4 491.9 423.1 495.6 427.8 500.3 431.6 506.9 433.4 513.4 436.3 518.1 440.0 520.4 443.8 519.1 448.4 516.3 453.1 514.4 458.8 512.5 463.4 508.8 467.2 504.1 470.0 501.3 473.8 499.4 478.4 497.5 482.2 494.7 485.0 492.8 488.8 490.0 494.4 486.3 500.0 482.5 505.6 479.7 511.3 476.9 516.9 474.6 524.4 473.5 531.9 475.0 537.5 472.2 536.6 470.3 526.3 469.4 518.8 468.4 511.3 467.5 503.8 466.6 496.3 465.6 488.8 464.7 482.2 463.8 475.6 462.8 469.1 460.9 463.4 458.1 458.8 454.4 454.1 450.6 449.4 446.9 444.7 444.6 440.0 445.0 435.3 446.9 430.6 445.0 425.9 443.1 421.3ZM439.4 309.7 445.0 307.8 452.5 308.2 457.2 306.5 462.8 307.3 465.6 309.7 462.8 312.1 456.3 314.0 448.8 313.4 443.1 312.5ZM452.5 304.1 460.0 302.4 467.5 301.6 475.0 300.9 478.8 302.8 473.1 305.0 465.6 305.8 458.1 305.8ZM467.5 308.8 475.0 307.3 482.5 306.9 486.3 308.8 490.0 312.1 486.3 314.4 482.5 316.3 478.8 313.4 472.2 312.5ZM484.4 301.6 490.0 299.4 497.5 298.3 505.0 297.5 514.4 297.1 520.9 297.9 515.3 300.3 507.8 302.2 502.2 305.0 498.4 307.8 494.7 305.9 489.1 305.0ZM489.1 315.3 494.7 316.3 500.3 320.0 505.4 324.9 499.8 324.9 494.1 322.1 489.3 319.3ZM492.8 308.8 498.4 308.8 502.2 312.1 499.4 314.0 494.7 312.5ZM475.0 320.0 480.6 318.5 484.4 320.9 480.6 323.4 476.5 322.6ZM507.8 304.1 514.4 301.3 523.8 299.4 535.0 297.9 546.3 297.1 559.4 297.5 570.6 298.4 566.9 301.3 559.4 304.1 551.9 307.8 546.3 312.5 540.6 317.2 535.0 320.9 529.4 324.7 524.7 328.4 521.9 327.5 519.1 322.8 517.2 318.1 516.3 312.5 512.5 308.8ZM543.4 321.9 548.1 320.9 550.0 323.4 545.3 324.9ZM443.1 391.3 448.8 390.3 454.4 392.2 458.5 395.0 452.5 394.8 446.9 393.3ZM459.1 396.5 465.6 396.9 467.9 398.8 461.9 399.3ZM469.0 398.2 472.0 398.4 472.4 399.5 469.4 399.5ZM537.8 392.2 539.7 387.5 543.4 382.8 548.1 378.1 551.9 373.4 556.0 369.5 562.0 369.5 570.1 371.0 575.3 371.8 580.0 374.4 589.9 375.7 595.0 376.3 595.0 376.3 602.5 376.8 610.0 376.6 615.6 377.8 618.4 383.8 623.1 391.3 627.8 399.7 632.5 407.2 635.3 411.1 640.0 410.2 645.6 410.0 643.8 415.6 640.0 422.2 635.3 427.8 631.6 433.4 629.7 440.0 629.7 447.5 627.8 453.1 625.0 458.8 621.3 464.4 618.4 470.0 615.6 475.6 611.9 480.3 607.2 484.1 602.5 486.9 598.4 488.8 595.0 488.0 593.1 485.0 591.3 479.4 589.4 471.9 587.5 464.4 584.7 456.9 582.8 449.4 583.8 441.9 581.9 435.3 580.0 428.8 578.1 423.1 574.4 419.4 566.9 418.4 557.5 417.5 550.0 415.6 544.4 411.9 539.7 406.3 536.9 400.6 537.8 395.0 537.8 406.3 536.9 398.8ZM635.3 456.9 640.0 452.2 643.8 451.3 644.9 455.9 642.8 462.5 640.0 469.1 636.3 473.8 632.5 471.9 632.5 466.3 633.4 460.6ZM550.0 368.8 549.1 363.1 551.9 357.5 557.5 354.7 555.6 350.0 551.9 346.3 556.6 342.5 561.3 339.7 560.3 335.0 556.6 330.3 553.8 325.6 556.6 320.0 561.3 314.4 566.9 311.6 574.4 310.6 581.9 312.1 589.4 312.5 595.0 312.9 595.0 312.9 602.5 312.5 610.0 315.3 615.6 318.1 619.4 316.3 625.0 314.4 630.6 312.5 635.3 309.7 640.0 308.8 645.6 310.6 651.3 309.7 656.9 307.8 662.5 306.9 670.0 305.4 677.5 304.6 685.0 304.1 692.5 305.0 697.2 307.8 703.8 308.8 711.3 309.7 718.8 310.3 726.3 309.7 733.8 310.6 741.3 312.1 748.8 312.9 756.3 314.0 763.8 314.4 771.3 315.3 778.8 316.3 786.3 317.8 793.8 318.5 800.3 319.6 798.4 321.9 792.8 322.8 790.0 324.7 786.3 328.4 782.5 329.4 779.7 330.3 777.8 332.2 781.6 335.0 784.4 338.8 786.3 343.4 783.4 344.4 779.7 340.6 775.9 336.9 774.1 333.1 775.0 329.4 771.3 327.5 768.4 329.4 763.8 330.3 758.1 331.3 753.4 333.1 751.6 336.9 754.4 338.8 760.0 339.7 764.7 342.5 767.5 345.3 768.4 348.1 764.7 347.2 761.9 348.1 763.8 351.9 765.6 357.5 764.7 364.1 762.8 368.8 760.0 371.6 758.1 367.8 756.3 364.1 753.4 362.2 749.7 363.1 745.0 364.1 746.9 366.9 750.6 368.8 753.4 372.5 754.4 377.2 754.4 381.9 752.5 386.6 748.8 390.3 745.0 392.2 742.2 394.1 740.3 398.8 738.4 404.4 736.6 408.1 733.8 407.2 732.8 402.5 730.9 399.7 728.1 402.5 726.3 407.2 724.8 410.4 725.7 414.9 727.6 420.5 728.5 425.0 730.0 430.6 727.2 431.6 724.4 426.9 721.6 421.3 719.7 415.6 718.8 410.0 716.9 404.4 715.0 398.8 713.1 393.1 711.3 389.4 707.5 391.3 703.8 395.0 700.0 398.8 697.2 402.5 695.3 406.3 693.4 411.9 691.6 416.6 689.7 419.4 687.8 413.8 684.1 406.3 681.3 400.6 678.4 395.9 675.6 392.2 670.0 390.3 664.4 388.4 659.7 387.5 657.8 389.4 658.8 393.1 656.9 397.8 653.1 400.6 648.4 402.5 643.8 405.3 639.1 407.2 636.6 408.5 633.4 404.8 629.7 398.8 625.9 393.1 622.2 387.5 619.8 383.4 617.5 378.1 621.3 375.3 623.1 370.6 617.5 369.7 612.8 372.5 608.1 370.6 602.5 369.7 596.9 370.6 595.0 368.8 591.3 370.6 587.5 365.0 582.8 362.2 578.1 364.1 574.4 361.3 570.6 364.1 565.0 365.0 559.4 366.9 553.8 369.7ZM550.0 336.9 552.8 334.1 554.7 337.8 556.6 343.4 553.8 346.3 550.4 344.4 551.5 340.6ZM545.9 339.7 548.5 338.4 549.3 342.1 546.6 343.4ZM764.7 372.5 767.5 369.7 772.2 367.8 775.9 365.0 777.8 362.2 775.4 355.6 774.1 350.0 775.9 346.3 779.7 347.2 781.0 351.9 778.8 354.7 779.9 364.3 777.8 368.0 774.1 371.8 769.4 374.6 766.6 376.4ZM772.8 333.5 774.6 334.3 775.4 344.4 773.5 344.0ZM628.8 310.6 632.5 307.8 638.1 305.9 643.0 305.0 641.9 306.9 637.2 308.8 632.5 311.8ZM615.6 299.4 623.1 298.6 632.5 299.8 631.6 301.3 623.1 300.5 616.0 300.9ZM662.5 300.3 670.0 300.9 677.5 302.4 676.8 303.5 669.6 302.4 662.9 301.6ZM718.8 306.9 726.3 306.5 734.1 307.6 733.4 308.8 726.3 308.0 719.1 308.2ZM773.1 312.5 777.8 312.7 778.0 314.0 773.3 313.8ZM595.0 301.3 597.6 300.9 597.3 302.8 595.0 303.1ZM692.5 414.7 695.3 413.8 697.2 417.5 695.7 420.7 693.1 419.0ZM754.9 387.5 756.6 387.1 756.8 391.3 755.3 391.6ZM756.3 396.9 760.0 395.0 761.9 400.6 763.8 406.3 766.6 413.8 768.4 418.4 764.7 419.4 761.9 413.8 759.1 408.1 757.2 402.5ZM753.4 412.8 755.9 412.3 756.6 415.3 754.0 416.0ZM706.6 424.1 710.3 423.1 715.0 427.8 719.7 433.4 724.4 439.1 726.6 442.8 723.6 444.9 718.8 441.1 714.1 435.5 709.4 429.9ZM723.4 443.8 730.0 444.1 737.5 445.6 745.0 447.5 754.4 448.4 756.6 450.3 748.8 450.5 739.4 449.2 730.0 447.3 724.4 446.2ZM730.0 429.7 733.8 426.9 737.5 423.1 742.2 421.3 745.2 424.1 745.2 428.8 743.1 433.4 740.3 437.2 735.6 439.3 730.9 436.4 729.1 432.5ZM745.9 431.6 748.8 429.7 751.8 432.5 750.6 438.1 747.8 441.1 745.9 437.4ZM764.7 435.3 769.4 434.4 775.0 435.3 780.6 437.2 786.3 439.1 791.9 441.9 796.6 445.6 799.6 449.4 795.6 450.5 790.0 448.6 784.4 447.7 779.7 446.8 775.0 443.9 770.3 441.1 765.6 439.3ZM770.3 426.9 772.2 427.3 772.4 430.6 770.5 430.3ZM797.5 440.0 801.3 440.6 801.4 442.8 797.9 442.4ZM802.8 442.8 805.0 443.2 805.0 444.9 802.9 444.5ZM758.1 451.3 763.8 450.9 764.7 452.4 758.5 452.8ZM730.9 473.8 733.8 469.1 739.4 465.3 745.0 461.6 750.6 457.8 754.4 454.1 760.0 452.2 765.6 453.1 769.4 455.9 772.2 459.7 774.1 456.9 775.0 451.3 777.8 453.1 780.6 458.8 784.4 463.4 790.0 469.1 794.7 473.8 798.4 479.4 799.6 485.0 796.6 490.6 791.9 495.3 786.3 498.1 780.6 497.8 775.0 495.3 772.2 491.6 768.4 488.8 762.8 487.8 756.3 488.8 749.7 490.6 743.1 493.4 737.5 492.5 734.7 487.8 732.8 481.3ZM767.5 503.8 772.2 502.3 774.3 504.7 770.3 507.5 767.5 506.6ZM794.7 511.3 801.3 507.5 808.8 503.8 816.3 500.0 823.0 497.2 821.1 500.0 814.4 503.8 806.9 507.5 800.3 511.3 795.6 513.3ZM813.4 467.2 815.9 468.1 818.1 471.5 816.6 472.3 814.0 469.6Z" fill="#0f5a8c" stroke="#0f5a8c" stroke-width="1" stroke-linejoin="round"/><path d="M637.2 351.9 640.0 350.9 641.9 354.7 641.1 358.4 643.8 362.2 641.9 364.3 639.3 360.5 637.4 356.6ZM615.3 354.7 620.3 353.4 625.9 354.7 626.5 357.5 621.3 358.6 616.0 357.5ZM618.4 383.4 622.2 389.9 626.9 397.4 631.6 404.9 635.7 410.4 634.0 410.6 628.9 402.7 624.3 395.2 619.6 387.7 617.3 383.8ZM648.1 387.9 651.3 386.0 655.4 387.5 657.6 390.1 655.0 390.1 651.3 388.6Z" fill="#fff"/></svg><!--MAP-END-->
    <!--SLIDE-GEN-START-->
<svg class="abs" style="left:0;top:0" width="1280" height="720" viewBox="0 0 1280 720"><defs><g id="pb"><path d="M-5.200 5.600 L0 19.200 L5.200 5.600Z" fill="#2aabf1"/><circle r="6.850" fill="#fff" stroke="#2aabf1" stroke-width="2.100"/></g><g id="pr"><path d="M-4.500 4.900 L0 18.300 L4.500 4.900Z" fill="#f44c4c"/><circle r="6" fill="#fff" stroke="#f44c4c" stroke-width="1.900"/></g></defs><use href="#pb" x="562.5" y="315"/><use href="#pb" x="573" y="322"/><use href="#pr" x="555.6" y="308.75"/><use href="#pr" x="552.25" y="316.25"/><use href="#pb" x="583.75" y="318.1"/><use href="#pb" x="593.75" y="325"/><use href="#pr" x="566.25" y="320"/><use href="#pb" x="558" y="332.5"/><use href="#pb" x="572.5" y="331.6"/><use href="#pb" x="580.6" y="331.5"/><use href="#pb" x="590" y="331.5"/><use href="#pr" x="565" y="328.75"/><use href="#pr" x="550" y="345.6"/><use href="#pr" x="559.4" y="350.6"/><use href="#pr" x="551" y="361.9"/><use href="#pb" x="599.4" y="346.25"/><use href="#pr" x="616.6" y="348.1"/><use href="#pb" x="576.25" y="359.4"/><use href="#pb" x="608.1" y="361.9"/><use href="#pb" x="664.4" y="343.1"/><use href="#pr" x="656.5" y="331.9"/><use href="#pr" x="635.6" y="371.9"/><use href="#pr" x="646" y="370"/><use href="#pb" x="681.9" y="314.75"/><use href="#pb" x="688.5" y="386.25"/><use href="#pb" x="716.25" y="378.75"/><use href="#pb" x="732.5" y="377.5"/><use href="#pb" x="740" y="390"/><use href="#pb" x="733.75" y="390"/><use href="#pb" x="723.75" y="383.1"/><use href="#pb" x="725" y="398.1"/><use href="#pb" x="725.25" y="414.4"/><use href="#pb" x="763.75" y="396.9"/><use href="#pr" x="759" y="353.75"/><use href="#pb" x="774.6" y="352.1"/><use href="#pb" x="755.3" y="431"/><use href="#pb" x="791.3" y="431"/><use href="#pb" x="778.75" y="470"/><use href="#pb" x="447" y="341.5"/><use href="#pb" x="495" y="414.5"/><use href="#pr" x="418.5" y="380.7"/><use href="#pr" x="487.5" y="435.1"/><use href="#pr" x="485.2" y="469.3"/><use href="#pr" x="623.8" y="431"/><use href="#pr" x="597.1" y="468.3"/><use href="#pr" x="823.8" y="451.3"/><use href="#pr" x="816.5" y="483"/></svg>
<div class="t" style="left:395.5px;top:258.5px;font-size:18.3px;font-weight:bold;color:#1f2f5f">Target dan Capaian Kinerja Fasilitasi Program BIPA</div>
<svg class="abs" style="left:492px;top:277px" width="140" height="3" viewBox="0 0 140 3"><path d="M0 1.500 H58 M78 1.500 H136" stroke="#e8a0a0" stroke-width=".8"/></svg>
<div class="abs" style="left:839px;top:295px;width:244.500px;height:68px;background:#dceefb;border:1px solid #bfe0f7"></div>
<div class="abs" style="left:839px;top:373.500px;width:244.500px;height:54px;background:#fcdada;border:1px solid #f6b9b9"></div>
<div class="abs" style="left:839px;top:429px;width:244.500px;height:50px;background:#fff;border:1px solid #f8cfb3"></div>
<div class="abs" style="left:838.500px;top:485px;width:245.500px;height:132.500px;background:#fdf1d6;border:1px solid #c3def2"></div>
<div class="t" style="left:811.3px;width:300px;text-align:center;top:302.43px;font-size:11.5px;color:#111;">Capaian Negara, Lembaga, dan Pemelajar</div>
<div class="t" style="left:811.5px;width:300px;text-align:center;top:316.08px;font-size:11.6px;color:#111;">Terfasilitasi Program BIPA BPPB</div>
<div class="t" style="left:811.3px;width:300px;text-align:center;top:332.62px;font-size:11.5px;color:#111;">Tahun <b>2015—2020</b></div>
<div class="t" style="left:811.3px;width:300px;text-align:center;top:346.43px;font-size:11.5px;color:#1b6fc2;"><b>30</b> negara, <b>206</b> lembaga, <b>79.719</b> pemelajar</div>
<div class="t" style="left:811.5px;width:300px;text-align:center;top:380.93px;font-size:11.5px;color:#111;">Target Tahun <b>2021—2024</b></div>
<div class="t" style="left:811.4px;width:300px;text-align:center;top:395.32px;font-size:11.5px;color:#c00000;"><b>53</b> negara (<b>23</b> negara sasaran baru)</div>
<div class="t" style="left:811.5px;width:300px;text-align:center;top:408.43px;font-size:11.5px;color:#c00000;"><b>100.000</b> pemelajar</div>
<div class="t" style="left:811px;width:300px;text-align:center;top:436.82px;font-size:11.5px;color:#111;">Capaian Tahun <b>2021</b></div>
<div class="t" style="left:811px;width:300px;text-align:center;top:450.62px;font-size:11.5px;color:#c00000;"><b>24</b> negara, <b>61</b> lembaga, <b>6.595</b> pemelajar</div>
<div class="t" style="left:811.3px;width:300px;text-align:center;top:468.22px;font-size:8.4px;color:#c00000;">(Data Januari—April 2021)</div>
<svg class="abs" style="left:820px;top:278px" width="40" height="60" viewBox="820 278 40 60"><path d="M831 302 L839.600 327.800 L848.200 302Z" fill="#2aabf1"/><circle cx="839.600" cy="294.400" r="9.500" fill="#fff" stroke="#2aabf1" stroke-width="3"/></svg>
<svg class="abs" style="left:820px;top:366px" width="40" height="60" viewBox="820 366 40 60"><path d="M830 393 L839.500 418.500 L849 393Z" fill="#f44c4c"/><circle cx="839.500" cy="384.600" r="10.400" fill="#fff" stroke="#f44c4c" stroke-width="3.200"/></svg>
<div class="t" style="left:844px;top:492.69px;font-size:10.7px;color:#111;">Ragam <b class="sq">Fasilitasi</b><b> Program BIPA</b>:</div>
<div class="t" style="left:844.5px;top:505.69px;font-size:10.7px;color:#111;">1.</div>
<div class="t" style="left:860.5px;top:505.69px;font-size:10.7px;color:#111;"><span class="sq">Penyediaan</span> <b class="sq">pengajar</b> BIPA</div>
<div class="t" style="left:860.5px;top:518.40px;font-size:10px;color:#111;">a. <span class="sq">Pengiriman pengajar ahli/tamu dari</span> Indonesia</div>
<div class="t" style="left:860.5px;top:530.30px;font-size:10px;color:#111;">b. <span class="sq">Penugasan pengajar lokal</span></div>
<div class="t" style="left:860.5px;top:542.10px;font-size:10px;color:#111;">c. <span class="sq">Pengajaran daring</span></div>
<div class="t" style="left:844.5px;top:553.93px;font-size:10.7px;color:#111;">2.</div>
<div class="t" style="left:860.5px;top:553.93px;font-size:10.7px;color:#111;"><span class="sq">Penyediaan</span> <b class="sq">standar</b> dan <b class="sq">bahan</b></div>
<div class="t" style="left:860.5px;top:566.98px;font-size:10.7px;color:#111;"><b class="sq">pembelajaran</b> BIPA</div>
<div class="t" style="left:844.5px;top:579.68px;font-size:10.7px;color:#111;">3.</div>
<div class="t" style="left:860.5px;top:579.68px;font-size:10.7px;color:#111;"><span class="sq">Penyelenggaraan</span> <b class="sq">forum ilmiah</b> BIPA</div>
<div class="t" style="left:844.5px;top:592.38px;font-size:10.7px;color:#111;">4.</div>
<div class="t" style="left:860.5px;top:592.38px;font-size:10.7px;color:#111;"><span class="sq">Penyelenggaraan</span> <b class="sq">apresiasi</b> dan <b class="sq">kompetisi</b></div>
<div class="t" style="left:860.5px;top:605.38px;font-size:10.7px;color:#111;">BIPA</div>
<div class="abs" style="left:357.500px;top:477.500px;width:24.500px;height:70.500px;background:#c00000"></div>
<div class="abs" style="left:357.500px;top:549.500px;width:24.500px;height:70.500px;background:#0070c0"></div>
<div class="t" style="left:339.750px;top:506.250px;width:60px;height:13px;line-height:13px;text-align:center;font-size:10.900px;font-weight:bold;color:#fff;transform:rotate(-90deg)">2021—2024</div>
<div class="t" style="left:339.750px;top:578.250px;width:60px;height:13px;line-height:13px;text-align:center;font-size:10.900px;font-weight:bold;color:#fff;transform:rotate(-90deg)">2015—2020</div>
<div class="abs" style="left:381.8px;top:511px;width:66.19999999999999px;height:37px;background:rgba(255,255,255,.9);border:1px solid #f9cdb0"></div>
<div class="abs" style="left:447.6px;top:480.7px;width:88.39999999999998px;height:67.30000000000001px;background:rgba(255,255,255,.9);border:1px solid #f9cdb0"></div>
<div class="abs" style="left:535.7px;top:501.8px;width:63.5px;height:46.19999999999999px;background:rgba(255,255,255,.9);border:1px solid #f9cdb0"></div>
<div class="abs" style="left:598.9px;top:480.7px;width:79.10000000000002px;height:67.30000000000001px;background:rgba(255,255,255,.9);border:1px solid #f9cdb0"></div>
<div class="abs" style="left:381.8px;top:549.6px;width:66.19999999999999px;height:27.899999999999977px;background:rgba(255,255,255,.9);border:1px solid #bcdcf3"></div>
<div class="abs" style="left:447.6px;top:549.6px;width:88.39999999999998px;height:68.0px;background:rgba(255,255,255,.9);border:1px solid #bcdcf3"></div>
<div class="abs" style="left:535.7px;top:549.6px;width:63.5px;height:28.199999999999932px;background:rgba(255,255,255,.9);border:1px solid #bcdcf3"></div>
<div class="abs" style="left:598.9px;top:549.6px;width:79.39999999999998px;height:57.39999999999998px;background:rgba(255,255,255,.9);border:1px solid #bcdcf3"></div>
<div class="abs" style="left:678px;top:549.6px;width:85px;height:66.10000000000002px;background:rgba(255,255,255,.9);border:1px solid #bcdcf3"></div>
<div class="t" style="left:387px;top:517.30px;font-size:8.0px;color:#c00000;font-weight:bold;">Amerika (3)</div><div class="t" style="left:387px;top:527.65px;font-size:8.0px;color:#c4161c;">Meksiko, Brazil</div><div class="t" style="left:387px;top:537.60px;font-size:8.0px;color:#c4161c;">Argentina</div>
<div class="t" style="left:453px;top:487.40px;font-size:8.0px;color:#c00000;font-weight:bold;">Eropa (10)</div><div class="t" style="left:453px;top:497.40px;font-size:8.0px;color:#c4161c;">Swiss, Turki,</div><div class="t" style="left:453px;top:507.00px;font-size:8.0px;color:#c4161c;">Belanda,&nbsp; Spanyol,</div><div class="t" style="left:453px;top:516.60px;font-size:8.0px;color:#c4161c;">Norwegia, Denmark,</div><div class="t" style="left:453px;top:526.40px;font-size:8.0px;color:#c4161c;">Portugal, Ukraina,</div><div class="t" style="left:453px;top:536.10px;font-size:8.0px;color:#c4161c;">Azerbaijan, Hongaria</div>
<div class="t" style="left:542.2px;top:508.40px;font-size:8.0px;color:#c00000;font-weight:bold;">Afrika (3)</div><div class="t" style="left:542.2px;top:518.10px;font-size:8.0px;color:#c4161c;">Afsel,</div><div class="t" style="left:542.2px;top:528.00px;font-size:8.0px;color:#c4161c;">Tanzania,</div><div class="t" style="left:542.2px;top:537.60px;font-size:8.0px;color:#c4161c;">Maroko</div>
<div class="t" style="left:604.6px;top:487.40px;font-size:8.0px;color:#c00000;font-weight:bold;">Aspas (7)</div><div class="t" style="left:604.6px;top:497.40px;font-size:8.0px;color:#c4161c;">Qatar, Arab Saudi,</div><div class="t" style="left:604.6px;top:507.00px;font-size:8.0px;color:#c4161c;">Korea Selatan,</div><div class="t" style="left:604.6px;top:516.60px;font-size:8.0px;color:#c4161c;">Kazakhstan,</div><div class="t" style="left:604.6px;top:526.40px;font-size:8.0px;color:#c4161c;">Pakistan, Selandia</div><div class="t" style="left:604.6px;top:536.10px;font-size:8.0px;color:#c4161c;">Baru, Fiji</div>
<div class="t" style="left:387px;top:556.80px;font-size:8.0px;color:#1f4e79;font-weight:bold;">Amerika (2)</div><div class="t" style="left:387px;top:566.70px;font-size:8.0px;color:#0a74c4;">AS, Suriname</div>
<div class="t" style="left:453px;top:556.80px;font-size:8.0px;color:#1f4e79;font-weight:bold;">Eropa (10)</div><div class="t" style="left:453px;top:566.70px;font-size:8.0px;color:#0a74c4;">Austria, Bulgaria,</div><div class="t" style="left:453px;top:576.30px;font-size:8.0px;color:#0a74c4;">Finlandia, Inggris,</div><div class="t" style="left:453px;top:585.80px;font-size:8.0px;color:#0a74c4;">Italia, Jerman,</div><div class="t" style="left:453px;top:595.40px;font-size:8.0px;color:#0a74c4;">Polandia, Prancis,</div><div class="t" style="left:453px;top:605.00px;font-size:8.0px;color:#0a74c4;">Rusia, Yunani</div>
<div class="t" style="left:542.2px;top:556.80px;font-size:8.0px;color:#1f4e79;font-weight:bold;">Afrika (2)</div><div class="t" style="left:542.2px;top:566.70px;font-size:8.0px;color:#0a74c4;">Mesir, Tunisia</div>
<div class="t" style="left:604.6px;top:556.80px;font-size:8.0px;color:#1f4e79;font-weight:bold;">Aspas (7)</div><div class="t" style="left:604.6px;top:566.70px;font-size:8.0px;color:#0a74c4;">Australia, India,</div><div class="t" style="left:604.6px;top:576.30px;font-size:8.0px;color:#0a74c4;">Jepang, Tiongkok,</div><div class="t" style="left:604.6px;top:585.80px;font-size:8.0px;color:#0a74c4;">UEA, Uzbekistan,</div><div class="t" style="left:604.6px;top:595.40px;font-size:8.0px;color:#0a74c4;">PNG</div>
<div class="t" style="left:683.8px;top:556.80px;font-size:8.0px;color:#1f4e79;font-weight:bold;">Astara (9)</div><div class="t" style="left:683.8px;top:566.70px;font-size:8.0px;color:#0a74c4;">Malaysia, Myanmar,</div><div class="t" style="left:683.8px;top:576.30px;font-size:8.0px;color:#0a74c4;">Filipina, Kamboja,</div><div class="t" style="left:683.8px;top:585.80px;font-size:8.0px;color:#0a74c4;">Laos, Singapura,</div><div class="t" style="left:683.8px;top:595.40px;font-size:8.0px;color:#0a74c4;">Thailand, Vietnam,</div><div class="t" style="left:683.8px;top:605.00px;font-size:8.0px;color:#0a74c4;">Timor Leste</div>
<div class="abs" style="left:354px;top:620.300px;width:734px;height:30.700px;background:#2d4f9e"></div>
<div class="t" style="left:373.7px;top:632.25px;font-size:7px;color:#e8edf7;">Gelar Wicara BIPA KJRI Dubai</div>
<div class="t" style="left:892.6px;top:629.13px;font-size:6.15px;color:#e8edf7;">Kementerian Pendidikan, Kebudayaan,</div>
<div class="t" style="left:892.6px;top:636.23px;font-size:6.15px;color:#e8edf7;">Riset, dan Teknologi</div>
<svg class="abs" style="left:861px;top:624px" width="24" height="24" viewBox="0 0 24 24"><circle cx="12" cy="11.500" r="10.800" fill="#2b9bd8" stroke="#dfeaf5" stroke-width=".9"/><path d="M12 4 L14 7.500 L12 19 L10 7.500Z" fill="#fff"/><path d="M5 9 Q8.500 8 11 10 L11 16 Q8 14.500 5 15.500Z M19 9 Q15.500 8 13 10 L13 16 Q16 14.500 19 15.500Z" fill="#fff"/><path d="M7 18 Q12 21 17 18" fill="none" stroke="#fff" stroke-width="1"/></svg>
<svg class="abs" style="left:740px;top:510px" width="110" height="115" viewBox="0 0 689 720">
<!-- flag -->
<g transform="rotate(22 45 205)"><rect x="8" y="180" width="72" height="22" fill="#e0344a"/><rect x="8" y="202" width="72" height="20" fill="#fff"/><rect x="78" y="178" width="6" height="85" fill="#555"/></g>
<!-- woman 1 -->
<path d="M160 275 L70 250 L62 268 L150 310Z" fill="#b79a85"/>
<circle cx="66" cy="258" r="11" fill="#f6c48a"/>
<path d="M170 380 L260 380 L262 500 L175 500Z" fill="#7b2a35"/>
<path d="M150 100 Q220 70 285 105 Q300 180 285 235 L155 235 Q140 170 150 100Z" fill="#1a1a1a"/>
<circle cx="225" cy="178" r="40" fill="#f6c48a"/>
<path d="M180 160 Q200 115 268 150 Q250 125 222 128 Q195 130 180 160Z" fill="#1a1a1a"/>
<path d="M205 195 Q225 212 246 195" fill="#fff" stroke="#c0504d" stroke-width="4"/>
<path d="M175 228 L280 228 L292 300 L285 395 L160 395 L150 300Z" fill="#b79a85"/>
<path d="M205 228 L250 228 L245 330 L210 330Z" fill="#fff"/>
<rect x="190" y="278" width="72" height="92" rx="4" fill="#7a2b2b" transform="rotate(-8 226 324)"/>
<rect x="203" y="290" width="40" height="14" fill="#e9d9c9" transform="rotate(-8 226 324)"/>
<circle cx="243" cy="258" r="7" fill="#2c5fa8"/>
<!-- woman 2 hijab -->
<path d="M292 350 L420 350 L425 570 L288 570Z" fill="#5c4b7a"/>
<path d="M275 290 L430 290 L428 420 L380 400 L330 420 L262 415Z" fill="#8b2346"/>
<path d="M310 130 Q330 90 380 100 Q435 115 438 200 Q440 260 420 290 L330 295 Q295 260 305 200Z" fill="#f0955a"/>
<ellipse cx="347" cy="168" rx="33" ry="40" fill="#f6c48a"/>
<path d="M328 190 Q345 205 362 188" fill="none" stroke="#c0504d" stroke-width="5"/>
<path d="M325 150 h14 M355 150 h14" stroke="#333" stroke-width="4"/>
<circle cx="362" cy="290" r="6" fill="#2c5fa8"/>
<path d="M262 405 L330 380 L345 400 L275 430Z" fill="#8b2346"/><circle cx="335" cy="393" r="12" fill="#f6c48a"/>
<!-- man -->
<path d="M442 410 L577 410 L575 620 L520 620 L512 470 L500 620 L445 620Z" fill="#2e4a5a"/>
<path d="M430 225 Q500 195 575 225 L620 400 L592 415 L575 340 L578 412 L440 412 L438 300 L425 260Z" fill="#a9cde0"/>
<path d="M484 222 L508 222 L512 370 L495 392 L478 370Z" fill="#2f4858"/>
<circle cx="522" cy="263" r="7" fill="#2c5fa8"/>
<ellipse cx="500" cy="145" rx="52" ry="58" fill="#f6c48a"/>
<path d="M428 70 Q480 40 565 75 Q580 110 565 150 Q560 105 530 95 Q480 90 445 105 Q440 130 440 150 Q420 110 428 70Z" fill="#1a1a1a"/>
<path d="M478 168 Q500 200 524 168Z" fill="#e33"/>
<path d="M462 132 q10 -10 20 0 M515 132 q10 -10 20 0" fill="none" stroke="#333" stroke-width="4"/>
<circle cx="604" cy="425" r="14" fill="#f6c48a"/>
<!-- suitcases -->
<path d="M228 490 V425 H290 V490" fill="none" stroke="#b8aaa3" stroke-width="9"/>
<rect x="172" y="482" width="183" height="215" rx="14" fill="#9c8880"/>
<rect x="225" y="530" width="110" height="12" rx="5" fill="#b8aaa3"/><rect x="225" y="585" width="110" height="12" rx="5" fill="#b8aaa3"/>
<path d="M425 570 Q450 545 475 570" fill="none" stroke="#8a6a4a" stroke-width="9"/>
<rect x="347" y="566" width="213" height="131" rx="12" fill="#f0a030"/>
<rect x="385" y="566" width="16" height="131" fill="#8a6a4a"/><rect x="470" y="566" width="16" height="131" fill="#8a6a4a"/>
</svg>
<!--SLIDE-GEN-END-->
    </div>
  </div>

  <!-- thumbs scrollbar -->
  <div class="abs" style="left:321px;top:205px;width:10px;height:28px;background:#dadada"></div>
  <div class="abs" style="left:321px;top:233px;width:10px;height:325px;background:#fff"></div>
  <div class="abs" style="left:173px;top:205px;width:1px;height:453px;background:#d0d0d0"></div>
  <div class="tn" style="top:272px">2</div><div class="tn" style="top:352px">3</div><div class="tn" style="top:432px">4</div><div class="tn" style="top:512px">5</div><div class="tn" style="top:592px;color:#d9532c">6</div>
  <div class="th" style="top:205px;height:55px"><div class="abs" style="left:0;top:-11px;width:117px;height:66px"><!--TH1S--><svg class="abs" style="left:0;top:0" width="117" height="66" viewBox="191 194 117 66">
<defs><linearGradient id="g1" x1="0" y1="0" x2="1" y2="1"><stop offset="0" stop-color="#d8d8d8"/><stop offset=".5" stop-color="#f2f2f2"/><stop offset="1" stop-color="#9a9a9a"/></linearGradient></defs>
<rect x="191" y="194" width="31.500" height="66" fill="#c9c9c9"/>
<path d="M191 194 H222.500 V214 Q208 224 191 220Z" fill="#dedede"/>
<path d="M191 214 Q204 206 222.500 212 V222 Q206 218 191 228Z" fill="#f1f1f1"/>
<path d="M191 226 L222.500 216 V226 L191 238Z" fill="#a9a9a9"/>
<path d="M196 232 L222.500 222 V230 L198 242Z" fill="#ededed"/>
<path d="M191 236 Q206 228 222.500 234 V244 Q206 238 191 248Z" fill="#8e8e8e"/>
<path d="M200 238 L220 230 L221 236 L202 246Z" fill="#e4e4e4"/>
<path d="M191 246 Q204 238 222.500 246 V260 H191Z" fill="#9a9a9a"/>
<path d="M205 244 Q212 240 218 246 L219 260 H204Z" fill="#c4c4c4"/>
<path d="M193 250 L203 246 L204 260 H193Z" fill="#6f6f6f"/>
<circle cx="211.500" cy="246" r="2.500" fill="#fff"/>
<circle cx="262.500" cy="204" r="3" fill="#2b9bd8"/>
<path d="M249 209.6 H280" stroke="#555" stroke-width="0.9"/><path d="M256 211.6 H273" stroke="#666" stroke-width="0.8"/><path d="M235 226 H290" stroke="#222" stroke-width="1.2"/><path d="M226.5 229.9 H298.5" stroke="#3b4fa8" stroke-width="1.1"/><path d="M255 249.7 H268" stroke="#333" stroke-width="1"/></svg><!--TH1E--></div></div>
  <div class="th" style="top:274px"><!--TH2S--><svg class="abs" style="left:0;top:0" width="117" height="66" viewBox="191 274 117 66"><path d="M200 280 H269" stroke="#2b3a7a" stroke-width="1.1"/>
<circle cx="225" cy="303.500" r="17" fill="#fdebbf" stroke="#eab54a" stroke-width=".6"/>
<circle cx="225" cy="306" r="13" fill="#fbd490" stroke="#eaa54a" stroke-width=".5"/>
<circle cx="225" cy="309" r="8" fill="#f29866"/>
<rect x="251.500" y="293.300" width="37.500" height="15.300" rx="1.500" fill="#fdf0c8" stroke="#d9bd7a" stroke-width=".5"/>
<rect x="207.700" y="316.600" width="38" height="15" rx="1.500" fill="#fbd9c6" stroke="#e7b9a0" stroke-width=".5"/>
<rect x="251.500" y="315.700" width="37.500" height="16" rx="1.500" fill="#ececec" stroke="#bdbdbd" stroke-width=".5"/>
<path d="M270 308.600 V315.700 M245.700 324 H251.500" stroke="#bbb" stroke-width=".5"/>
<path d="M254 296.5 H287" stroke="#b0a890" stroke-width="0.5"/><path d="M254 299 H287" stroke="#b0a890" stroke-width="0.5"/><path d="M254 301.5 H287" stroke="#b0a890" stroke-width="0.5"/><path d="M254 304 H287" stroke="#b0a890" stroke-width="0.5"/><path d="M210 320 H243" stroke="#c8a090" stroke-width="0.5"/><path d="M210 322.5 H243" stroke="#c8a090" stroke-width="0.5"/><path d="M210 325 H243" stroke="#c8a090" stroke-width="0.5"/><path d="M210 327.5 H243" stroke="#c8a090" stroke-width="0.5"/><path d="M254 319.5 H287" stroke="#aaa" stroke-width="0.5"/><path d="M254 322 H287" stroke="#aaa" stroke-width="0.5"/><path d="M254 324.5 H287" stroke="#aaa" stroke-width="0.5"/><path d="M254 327 H287" stroke="#aaa" stroke-width="0.5"/><path d="M254 329.5 H287" stroke="#aaa" stroke-width="0.5"/><rect x="191" y="334.800" width="117" height="5.200" fill="#2d4f9e"/><circle cx="274" cy="337.400" r="1.300" fill="#cfe3f5"/><path d="M277 337.4 H292" stroke="#bcd" stroke-width="0.5"/></svg><!--TH2E--></div>
  <div class="th" style="top:354px"><!--TH3S--><svg class="abs" style="left:0;top:0" width="117" height="66" viewBox="191 354 117 66"><path d="M200 360.4 H269" stroke="#2b3a7a" stroke-width="1.1"/><path d="M200 363.6 H240" stroke="#999" stroke-width="0.6"/>
<circle cx="218" cy="386" r="12" fill="none" stroke="#ececec" stroke-width="5"/>
<circle cx="240" cy="395" r="8" fill="none" stroke="#ececec" stroke-width="4"/>
<circle cx="264" cy="376" r="9" fill="none" stroke="#efefef" stroke-width="4"/>
<path d="M210 384.5 H227" stroke="#555" stroke-width="0.5"/><path d="M210 386.5 H227" stroke="#555" stroke-width="0.5"/><path d="M210 388.5 H227" stroke="#c4a63a" stroke-width="0.6"/><path d="M210 390.5 H227" stroke="#c4a63a" stroke-width="0.6"/><path d="M231 381.5 H245" stroke="#999" stroke-width="0.5"/><path d="M231 384.5 H245" stroke="#999" stroke-width="0.5"/><path d="M249 377.5 H263" stroke="#666" stroke-width="0.5"/><path d="M249 379.5 H263" stroke="#c4a63a" stroke-width="0.7"/><path d="M249 381.5 H263" stroke="#c4a63a" stroke-width="0.7"/><path d="M249 384.5 H263" stroke="#aaa" stroke-width="0.5"/><path d="M249 387.5 H263" stroke="#aaa" stroke-width="0.5"/><path d="M266 381.5 H300" stroke="#888" stroke-width="0.5"/><path d="M269 384.5 H300" stroke="#d9c36a" stroke-width="0.6"/><path d="M269 387 H300" stroke="#d9c36a" stroke-width="0.6"/><path d="M269 389.5 H300" stroke="#c4c4c4" stroke-width="0.45"/><path d="M269 392.5 H300" stroke="#c4c4c4" stroke-width="0.45"/><path d="M269 395.5 H300" stroke="#c4c4c4" stroke-width="0.45"/><path d="M269 398.5 H300" stroke="#c4c4c4" stroke-width="0.45"/><path d="M269 401.5 H300" stroke="#c4c4c4" stroke-width="0.45"/><path d="M269 404.5 H300" stroke="#c4c4c4" stroke-width="0.45"/><path d="M269 407.5 H300" stroke="#c4c4c4" stroke-width="0.45"/><path d="M218 398 H232" stroke="#ccc" stroke-width="0.4"/><path d="M218 401 H232" stroke="#ccc" stroke-width="0.4"/><path d="M218 404 H232" stroke="#ccc" stroke-width="0.4"/><rect x="191" y="414.700" width="117" height="5.300" fill="#2d4f9e"/><circle cx="274" cy="417.400" r="1.300" fill="#cfe3f5"/><path d="M277 417.4 H292" stroke="#bcd" stroke-width="0.5"/></svg><!--TH3E--></div>
  <div class="th" style="top:434px"><!--TH4S--><svg class="abs" style="left:0;top:0" width="117" height="66" viewBox="191 434 117 66"><path d="M199 440.5 H282" stroke="#2b3a7a" stroke-width="1.1"/>
<rect x="198" y="447.600" width="89.600" height="33.400" fill="#f4f8fc" stroke="#7d9cc8" stroke-width=".6"/>
<rect x="226" y="447.900" width="28" height="32.800" fill="#e2ecf7"/>
<rect x="254" y="447.900" width="33.300" height="32.800" fill="#cfdcee"/>
<path d="M198 464 H287.600" stroke="#7d9cc8" stroke-width=".5"/>
<path d="M200 450 H210" stroke="#333" stroke-width="0.7"/><path d="M228 450 H238" stroke="#333" stroke-width="0.7"/><path d="M256 450 H268" stroke="#333" stroke-width="0.7"/><path d="M200 455 H222" stroke="#777" stroke-width="0.5"/><path d="M200 458 H222" stroke="#777" stroke-width="0.5"/><path d="M200 461 H218" stroke="#aaa" stroke-width="0.5"/><path d="M228 456 H250" stroke="#999" stroke-width="0.5"/><path d="M228 459 H250" stroke="#999" stroke-width="0.5"/><path d="M256 453.5 H285" stroke="#778" stroke-width="0.5"/><path d="M256 456.5 H285" stroke="#778" stroke-width="0.5"/><path d="M256 459.5 H285" stroke="#778" stroke-width="0.5"/><path d="M204 469.5 H222" stroke="#666" stroke-width="0.5"/><path d="M204 472.5 H222" stroke="#666" stroke-width="0.5"/><path d="M204 475.5 H222" stroke="#aaa" stroke-width="0.5"/><path d="M236 469.5 H251" stroke="#999" stroke-width="0.5"/><path d="M236 472.5 H251" stroke="#999" stroke-width="0.5"/><path d="M258 468.5 H285" stroke="#667" stroke-width="0.5"/><path d="M258 471.5 H285" stroke="#667" stroke-width="0.5"/><path d="M258 474.5 H285" stroke="#667" stroke-width="0.5"/><path d="M258 477.5 H285" stroke="#667" stroke-width="0.5"/><rect x="191" y="495" width="117" height="3.800" fill="#2d4f9e"/><path d="M277 496.9 H292" stroke="#bcd" stroke-width="0.5"/></svg><!--TH4E--></div>
  <div class="th" style="top:514px"><!--TH5S--><svg class="abs" style="left:0;top:0" width="117" height="66" viewBox="191 514 117 66"><path d="M199 520.4 H252" stroke="#2b3a7a" stroke-width="1.1"/>
<rect x="212.500" y="525.800" width="76.500" height="12.200" fill="#f0f0f0" stroke="#bbb" stroke-width=".4"/>
<path d="M212.500 532 H200 V553 M289 532 H296 V546.600" fill="none" stroke="#e6c65a" stroke-width=".5"/>
<circle cx="246" cy="553" r="13.400" fill="#3d7fd6"/>
<circle cx="240.500" cy="560.400" r="12.800" fill="#3db86f" opacity=".92"/>
<circle cx="252.400" cy="561.600" r="12.800" fill="#df4b3c" opacity=".92"/>
<circle cx="246" cy="556" r="9" fill="#2e5f9e" opacity=".85"/>
<circle cx="246" cy="557" r="6.800" fill="#b99522"/>
<rect x="198" y="553" width="29" height="8.600" fill="#fdfbf0" stroke="#e6c65a" stroke-width=".5"/>
<rect x="266.500" y="546.600" width="36" height="11.800" fill="#f6f9fd" stroke="#5b8bd0" stroke-width=".5"/>
<path d="M214 528 H287" stroke="#aaa" stroke-width="0.4"/><path d="M214 531 H287" stroke="#aaa" stroke-width="0.4"/><path d="M214 534 H287" stroke="#aaa" stroke-width="0.4"/><path d="M200 555.5 H225" stroke="#887" stroke-width="0.4"/><path d="M200 557.5 H225" stroke="#887" stroke-width="0.4"/><path d="M200 559.5 H225" stroke="#887" stroke-width="0.4"/><path d="M268 549.5 H300" stroke="#99a" stroke-width="0.4"/><path d="M268 552.5 H300" stroke="#99a" stroke-width="0.4"/><path d="M268 555.5 H300" stroke="#99a" stroke-width="0.4"/><path d="M242 556 H250" stroke="#fff" stroke-width="0.4"/><path d="M242 558 H250" stroke="#fff" stroke-width="0.4"/><rect x="191" y="573.800" width="117" height="4.800" fill="#2d4f9e"/><path d="M277 576.2 H292" stroke="#bcd" stroke-width="0.5"/></svg><!--TH5E--></div>
  <div class="abs" style="left:189.5px;top:592.5px;width:120px;height:69px;background:#e8603c"></div>
  <div class="th" style="top:594px"><!--TH6S--><div class="abs" style="left:0;top:0;width:734px;height:413px;transform-origin:0 0;transform:scale(0.15940);overflow:hidden"><div class="abs" style="left:-354px;top:-238px;width:1280px;height:720px"><svg class="abs" style="left:0;top:0" width="1280" height="720" viewBox="0 0 1280 720"><path d="M363.4 334.1 366.3 330.3 369.1 327.5 373.8 325.3 377.9 322.3 375.3 320.4 379.4 318.1 385.9 315.3 392.5 313.4 400.0 312.1 406.6 313.4 413.1 314.0 420.6 313.4 428.1 314.4 435.6 313.4 440.3 315.3 443.1 317.4 448.8 318.1 454.4 316.3 460.0 315.3 467.5 314.4 475.0 315.3 478.8 318.1 476.9 320.9 472.2 322.8 467.5 324.7 461.9 327.5 457.8 331.6 460.0 334.3 464.7 335.2 467.5 338.0 470.1 339.1 472.8 335.4 476.5 330.5 480.3 326.8 484.4 324.7 490.0 326.6 494.7 329.4 498.4 334.1 500.5 336.9 502.4 339.9 500.5 342.5 497.5 343.6 503.1 347.2 501.3 350.0 496.8 349.3 493.8 346.3 490.0 347.4 487.4 351.1 484.4 354.9 479.7 355.8 475.0 358.6 469.4 362.4 464.7 366.1 460.0 369.9 455.5 373.6 452.7 377.4 451.8 381.9 452.7 385.6 449.9 386.8 448.0 382.3 446.9 379.3 443.1 378.1 437.5 378.1 431.9 379.3 427.4 381.1 424.6 384.9 423.6 389.4 425.5 393.9 429.1 395.0 433.8 393.1 437.5 392.4 438.6 395.0 436.8 398.8 437.7 402.5 440.5 406.3 443.3 410.0 446.1 412.8 448.8 414.7 448.2 417.1 444.3 416.8 440.3 414.7 436.6 411.1 432.8 407.4 429.1 404.6 424.4 402.7 419.7 400.8 415.0 397.1 411.3 393.3 407.5 388.6 404.9 383.0 403.0 378.3 401.1 380.2 402.1 384.9 403.0 390.5 400.9 388.6 399.1 383.8 397.2 379.3 395.3 375.5 392.5 370.6 391.6 365.0 392.5 359.4 396.3 354.9 399.1 350.0 400.9 344.4 401.9 338.8 400.0 334.3 397.2 330.5 391.6 328.6 385.0 329.2 377.5 330.5 370.0 332.4ZM444.1 416.6 447.8 417.5 449.7 414.7 452.5 411.9 457.2 410.0 463.8 409.6 470.3 410.9 476.9 412.8 482.5 415.6 487.2 418.4 491.9 423.1 495.6 427.8 500.3 431.6 506.9 433.4 513.4 436.3 518.1 440.0 520.4 443.8 519.1 448.4 516.3 453.1 514.4 458.8 512.5 463.4 508.8 467.2 504.1 470.0 501.3 473.8 499.4 478.4 497.5 482.2 494.7 485.0 492.8 488.8 490.0 494.4 486.3 500.0 482.5 505.6 479.7 511.3 476.9 516.9 474.6 524.4 473.5 531.9 475.0 537.5 472.2 536.6 470.3 526.3 469.4 518.8 468.4 511.3 467.5 503.8 466.6 496.3 465.6 488.8 464.7 482.2 463.8 475.6 462.8 469.1 460.9 463.4 458.1 458.8 454.4 454.1 450.6 449.4 446.9 444.7 444.6 440.0 445.0 435.3 446.9 430.6 445.0 425.9 443.1 421.3ZM439.4 309.7 445.0 307.8 452.5 308.2 457.2 306.5 462.8 307.3 465.6 309.7 462.8 312.1 456.3 314.0 448.8 313.4 443.1 312.5ZM452.5 304.1 460.0 302.4 467.5 301.6 475.0 300.9 478.8 302.8 473.1 305.0 465.6 305.8 458.1 305.8ZM467.5 308.8 475.0 307.3 482.5 306.9 486.3 308.8 490.0 312.1 486.3 314.4 482.5 316.3 478.8 313.4 472.2 312.5ZM484.4 301.6 490.0 299.4 497.5 298.3 505.0 297.5 514.4 297.1 520.9 297.9 515.3 300.3 507.8 302.2 502.2 305.0 498.4 307.8 494.7 305.9 489.1 305.0ZM489.1 315.3 494.7 316.3 500.3 320.0 505.4 324.9 499.8 324.9 494.1 322.1 489.3 319.3ZM492.8 308.8 498.4 308.8 502.2 312.1 499.4 314.0 494.7 312.5ZM475.0 320.0 480.6 318.5 484.4 320.9 480.6 323.4 476.5 322.6ZM507.8 304.1 514.4 301.3 523.8 299.4 535.0 297.9 546.3 297.1 559.4 297.5 570.6 298.4 566.9 301.3 559.4 304.1 551.9 307.8 546.3 312.5 540.6 317.2 535.0 320.9 529.4 324.7 524.7 328.4 521.9 327.5 519.1 322.8 517.2 318.1 516.3 312.5 512.5 308.8ZM543.4 321.9 548.1 320.9 550.0 323.4 545.3 324.9ZM443.1 391.3 448.8 390.3 454.4 392.2 458.5 395.0 452.5 394.8 446.9 393.3ZM459.1 396.5 465.6 396.9 467.9 398.8 461.9 399.3ZM469.0 398.2 472.0 398.4 472.4 399.5 469.4 399.5ZM537.8 392.2 539.7 387.5 543.4 382.8 548.1 378.1 551.9 373.4 556.0 369.5 562.0 369.5 570.1 371.0 575.3 371.8 580.0 374.4 589.9 375.7 595.0 376.3 595.0 376.3 602.5 376.8 610.0 376.6 615.6 377.8 618.4 383.8 623.1 391.3 627.8 399.7 632.5 407.2 635.3 411.1 640.0 410.2 645.6 410.0 643.8 415.6 640.0 422.2 635.3 427.8 631.6 433.4 629.7 440.0 629.7 447.5 627.8 453.1 625.0 458.8 621.3 464.4 618.4 470.0 615.6 475.6 611.9 480.3 607.2 484.1 602.5 486.9 598.4 488.8 595.0 488.0 593.1 485.0 591.3 479.4 589.4 471.9 587.5 464.4 584.7 456.9 582.8 449.4 583.8 441.9 581.9 435.3 580.0 428.8 578.1 423.1 574.4 419.4 566.9 418.4 557.5 417.5 550.0 415.6 544.4 411.9 539.7 406.3 536.9 400.6 537.8 395.0 537.8 406.3 536.9 398.8ZM635.3 456.9 640.0 452.2 643.8 451.3 644.9 455.9 642.8 462.5 640.0 469.1 636.3 473.8 632.5 471.9 632.5 466.3 633.4 460.6ZM550.0 368.8 549.1 363.1 551.9 357.5 557.5 354.7 555.6 350.0 551.9 346.3 556.6 342.5 561.3 339.7 560.3 335.0 556.6 330.3 553.8 325.6 556.6 320.0 561.3 314.4 566.9 311.6 574.4 310.6 581.9 312.1 589.4 312.5 595.0 312.9 595.0 312.9 602.5 312.5 610.0 315.3 615.6 318.1 619.4 316.3 625.0 314.4 630.6 312.5 635.3 309.7 640.0 308.8 645.6 310.6 651.3 309.7 656.9 307.8 662.5 306.9 670.0 305.4 677.5 304.6 685.0 304.1 692.5 305.0 697.2 307.8 703.8 308.8 711.3 309.7 718.8 310.3 726.3 309.7 733.8 310.6 741.3 312.1 748.8 312.9 756.3 314.0 763.8 314.4 771.3 315.3 778.8 316.3 786.3 317.8 793.8 318.5 800.3 319.6 798.4 321.9 792.8 322.8 790.0 324.7 786.3 328.4 782.5 329.4 779.7 330.3 777.8 332.2 781.6 335.0 784.4 338.8 786.3 343.4 783.4 344.4 779.7 340.6 775.9 336.9 774.1 333.1 775.0 329.4 771.3 327.5 768.4 329.4 763.8 330.3 758.1 331.3 753.4 333.1 751.6 336.9 754.4 338.8 760.0 339.7 764.7 342.5 767.5 345.3 768.4 348.1 764.7 347.2 761.9 348.1 763.8 351.9 765.6 357.5 764.7 364.1 762.8 368.8 760.0 371.6 758.1 367.8 756.3 364.1 753.4 362.2 749.7 363.1 745.0 364.1 746.9 366.9 750.6 368.8 753.4 372.5 754.4 377.2 754.4 381.9 752.5 386.6 748.8 390.3 745.0 392.2 742.2 394.1 740.3 398.8 738.4 404.4 736.6 408.1 733.8 407.2 732.8 402.5 730.9 399.7 728.1 402.5 726.3 407.2 724.8 410.4 725.7 414.9 727.6 420.5 728.5 425.0 730.0 430.6 727.2 431.6 724.4 426.9 721.6 421.3 719.7 415.6 718.8 410.0 716.9 404.4 715.0 398.8 713.1 393.1 711.3 389.4 707.5 391.3 703.8 395.0 700.0 398.8 697.2 402.5 695.3 406.3 693.4 411.9 691.6 416.6 689.7 419.4 687.8 413.8 684.1 406.3 681.3 400.6 678.4 395.9 675.6 392.2 670.0 390.3 664.4 388.4 659.7 387.5 657.8 389.4 658.8 393.1 656.9 397.8 653.1 400.6 648.4 402.5 643.8 405.3 639.1 407.2 636.6 408.5 633.4 404.8 629.7 398.8 625.9 393.1 622.2 387.5 619.8 383.4 617.5 378.1 621.3 375.3 623.1 370.6 617.5 369.7 612.8 372.5 608.1 370.6 602.5 369.7 596.9 370.6 595.0 368.8 591.3 370.6 587.5 365.0 582.8 362.2 578.1 364.1 574.4 361.3 570.6 364.1 565.0 365.0 559.4 366.9 553.8 369.7ZM550.0 336.9 552.8 334.1 554.7 337.8 556.6 343.4 553.8 346.3 550.4 344.4 551.5 340.6ZM545.9 339.7 548.5 338.4 549.3 342.1 546.6 343.4ZM764.7 372.5 767.5 369.7 772.2 367.8 775.9 365.0 777.8 362.2 775.4 355.6 774.1 350.0 775.9 346.3 779.7 347.2 781.0 351.9 778.8 354.7 779.9 364.3 777.8 368.0 774.1 371.8 769.4 374.6 766.6 376.4ZM772.8 333.5 774.6 334.3 775.4 344.4 773.5 344.0ZM628.8 310.6 632.5 307.8 638.1 305.9 643.0 305.0 641.9 306.9 637.2 308.8 632.5 311.8ZM615.6 299.4 623.1 298.6 632.5 299.8 631.6 301.3 623.1 300.5 616.0 300.9ZM662.5 300.3 670.0 300.9 677.5 302.4 676.8 303.5 669.6 302.4 662.9 301.6ZM718.8 306.9 726.3 306.5 734.1 307.6 733.4 308.8 726.3 308.0 719.1 308.2ZM773.1 312.5 777.8 312.7 778.0 314.0 773.3 313.8ZM595.0 301.3 597.6 300.9 597.3 302.8 595.0 303.1ZM692.5 414.7 695.3 413.8 697.2 417.5 695.7 420.7 693.1 419.0ZM754.9 387.5 756.6 387.1 756.8 391.3 755.3 391.6ZM756.3 396.9 760.0 395.0 761.9 400.6 763.8 406.3 766.6 413.8 768.4 418.4 764.7 419.4 761.9 413.8 759.1 408.1 757.2 402.5ZM753.4 412.8 755.9 412.3 756.6 415.3 754.0 416.0ZM706.6 424.1 710.3 423.1 715.0 427.8 719.7 433.4 724.4 439.1 726.6 442.8 723.6 444.9 718.8 441.1 714.1 435.5 709.4 429.9ZM723.4 443.8 730.0 444.1 737.5 445.6 745.0 447.5 754.4 448.4 756.6 450.3 748.8 450.5 739.4 449.2 730.0 447.3 724.4 446.2ZM730.0 429.7 733.8 426.9 737.5 423.1 742.2 421.3 745.2 424.1 745.2 428.8 743.1 433.4 740.3 437.2 735.6 439.3 730.9 436.4 729.1 432.5ZM745.9 431.6 748.8 429.7 751.8 432.5 750.6 438.1 747.8 441.1 745.9 437.4ZM764.7 435.3 769.4 434.4 775.0 435.3 780.6 437.2 786.3 439.1 791.9 441.9 796.6 445.6 799.6 449.4 795.6 450.5 790.0 448.6 784.4 447.7 779.7 446.8 775.0 443.9 770.3 441.1 765.6 439.3ZM770.3 426.9 772.2 427.3 772.4 430.6 770.5 430.3ZM797.5 440.0 801.3 440.6 801.4 442.8 797.9 442.4ZM802.8 442.8 805.0 443.2 805.0 444.9 802.9 444.5ZM758.1 451.3 763.8 450.9 764.7 452.4 758.5 452.8ZM730.9 473.8 733.8 469.1 739.4 465.3 745.0 461.6 750.6 457.8 754.4 454.1 760.0 452.2 765.6 453.1 769.4 455.9 772.2 459.7 774.1 456.9 775.0 451.3 777.8 453.1 780.6 458.8 784.4 463.4 790.0 469.1 794.7 473.8 798.4 479.4 799.6 485.0 796.6 490.6 791.9 495.3 786.3 498.1 780.6 497.8 775.0 495.3 772.2 491.6 768.4 488.8 762.8 487.8 756.3 488.8 749.7 490.6 743.1 493.4 737.5 492.5 734.7 487.8 732.8 481.3ZM767.5 503.8 772.2 502.3 774.3 504.7 770.3 507.5 767.5 506.6ZM794.7 511.3 801.3 507.5 808.8 503.8 816.3 500.0 823.0 497.2 821.1 500.0 814.4 503.8 806.9 507.5 800.3 511.3 795.6 513.3ZM813.4 467.2 815.9 468.1 818.1 471.5 816.6 472.3 814.0 469.6Z" fill="#0f5a8c" stroke="#0f5a8c" stroke-width="1" stroke-linejoin="round"/><path d="M637.2 351.9 640.0 350.9 641.9 354.7 641.1 358.4 643.8 362.2 641.9 364.3 639.3 360.5 637.4 356.6ZM615.3 354.7 620.3 353.4 625.9 354.7 626.5 357.5 621.3 358.6 616.0 357.5ZM618.4 383.4 622.2 389.9 626.9 397.4 631.6 404.9 635.7 410.4 634.0 410.6 628.9 402.7 624.3 395.2 619.6 387.7 617.3 383.8ZM648.1 387.9 651.3 386.0 655.4 387.5 657.6 390.1 655.0 390.1 651.3 388.6Z" fill="#fff"/></svg>
    
<svg class="abs" style="left:0;top:0" width="1280" height="720" viewBox="0 0 1280 720"><defs><g id="pb2"><path d="M-5.200 5.600 L0 19.200 L5.200 5.600Z" fill="#2aabf1"/><circle r="6.850" fill="#fff" stroke="#2aabf1" stroke-width="2.100"/></g><g id="pr2"><path d="M-4.500 4.900 L0 18.300 L4.500 4.900Z" fill="#f44c4c"/><circle r="6" fill="#fff" stroke="#f44c4c" stroke-width="1.900"/></g></defs><use href="#pb2" x="562.5" y="315"/><use href="#pb2" x="573" y="322"/><use href="#pr2" x="555.6" y="308.75"/><use href="#pr2" x="552.25" y="316.25"/><use href="#pb2" x="583.75" y="318.1"/><use href="#pb2" x="593.75" y="325"/><use href="#pr2" x="566.25" y="320"/><use href="#pb2" x="558" y="332.5"/><use href="#pb2" x="572.5" y="331.6"/><use href="#pb2" x="580.6" y="331.5"/><use href="#pb2" x="590" y="331.5"/><use href="#pr2" x="565" y="328.75"/><use href="#pr2" x="550" y="345.6"/><use href="#pr2" x="559.4" y="350.6"/><use href="#pr2" x="551" y="361.9"/><use href="#pb2" x="599.4" y="346.25"/><use href="#pr2" x="616.6" y="348.1"/><use href="#pb2" x="576.25" y="359.4"/><use href="#pb2" x="608.1" y="361.9"/><use href="#pb2" x="664.4" y="343.1"/><use href="#pr2" x="656.5" y="331.9"/><use href="#pr2" x="635.6" y="371.9"/><use href="#pr2" x="646" y="370"/><use href="#pb2" x="681.9" y="314.75"/><use href="#pb2" x="688.5" y="386.25"/><use href="#pb2" x="716.25" y="378.75"/><use href="#pb2" x="732.5" y="377.5"/><use href="#pb2" x="740" y="390"/><use href="#pb2" x="733.75" y="390"/><use href="#pb2" x="723.75" y="383.1"/><use href="#pb2" x="725" y="398.1"/><use href="#pb2" x="725.25" y="414.4"/><use href="#pb2" x="763.75" y="396.9"/><use href="#pr2" x="759" y="353.75"/><use href="#pb2" x="774.6" y="352.1"/><use href="#pb2" x="755.3" y="431"/><use href="#pb2" x="791.3" y="431"/><use href="#pb2" x="778.75" y="470"/><use href="#pb2" x="447" y="341.5"/><use href="#pb2" x="495" y="414.5"/><use href="#pr2" x="418.5" y="380.7"/><use href="#pr2" x="487.5" y="435.1"/><use href="#pr2" x="485.2" y="469.3"/><use href="#pr2" x="623.8" y="431"/><use href="#pr2" x="597.1" y="468.3"/><use href="#pr2" x="823.8" y="451.3"/><use href="#pr2" x="816.5" y="483"/></svg>
<div class="t" style="left:395.5px;top:258.5px;font-size:18.3px;font-weight:bold;color:#1f2f5f">Target dan Capaian Kinerja Fasilitasi Program BIPA</div>
<svg class="abs" style="left:492px;top:277px" width="140" height="3" viewBox="0 0 140 3"><path d="M0 1.500 H58 M78 1.500 H136" stroke="#e8a0a0" stroke-width=".8"/></svg>
<div class="abs" style="left:839px;top:295px;width:244.500px;height:68px;background:#dceefb;border:1px solid #bfe0f7"></div>
<div class="abs" style="left:839px;top:373.500px;width:244.500px;height:54px;background:#fcdada;border:1px solid #f6b9b9"></div>
<div class="abs" style="left:839px;top:429px;width:244.500px;height:50px;background:#fff;border:1px solid #f8cfb3"></div>
<div class="abs" style="left:838.500px;top:485px;width:245.500px;height:132.500px;background:#fdf1d6;border:1px solid #c3def2"></div>
<div class="t" style="left:811.3px;width:300px;text-align:center;top:302.43px;font-size:11.5px;color:#111;">Capaian Negara, Lembaga, dan Pemelajar</div>
<div class="t" style="left:811.5px;width:300px;text-align:center;top:316.08px;font-size:11.6px;color:#111;">Terfasilitasi Program BIPA BPPB</div>
<div class="t" style="left:811.3px;width:300px;text-align:center;top:332.62px;font-size:11.5px;color:#111;">Tahun <b>2015—2020</b></div>
<div class="t" style="left:811.3px;width:300px;text-align:center;top:346.43px;font-size:11.5px;color:#1b6fc2;"><b>30</b> negara, <b>206</b> lembaga, <b>79.719</b> pemelajar</div>
<div class="t" style="left:811.5px;width:300px;text-align:center;top:380.93px;font-size:11.5px;color:#111;">Target Tahun <b>2021—2024</b></div>
<div class="t" style="left:811.4px;width:300px;text-align:center;top:395.32px;font-size:11.5px;color:#c00000;"><b>53</b> negara (<b>23</b> negara sasaran baru)</div>
<div class="t" style="left:811.5px;width:300px;text-align:center;top:408.43px;font-size:11.5px;color:#c00000;"><b>100.000</b> pemelajar</div>
<div class="t" style="left:811px;width:300px;text-align:center;top:436.82px;font-size:11.5px;color:#111;">Capaian Tahun <b>2021</b></div>
<div class="t" style="left:811px;width:300px;text-align:center;top:450.62px;font-size:11.5px;color:#c00000;"><b>24</b> negara, <b>61</b> lembaga, <b>6.595</b> pemelajar</div>
<div class="t" style="left:811.3px;width:300px;text-align:center;top:468.22px;font-size:8.4px;color:#c00000;">(Data Januari—April 2021)</div>
<svg class="abs" style="left:820px;top:278px" width="40" height="60" viewBox="820 278 40 60"><path d="M831 302 L839.600 327.800 L848.200 302Z" fill="#2aabf1"/><circle cx="839.600" cy="294.400" r="9.500" fill="#fff" stroke="#2aabf1" stroke-width="3"/></svg>
<svg class="abs" style="left:820px;top:366px" width="40" height="60" viewBox="820 366 40 60"><path d="M830 393 L839.500 418.500 L849 393Z" fill="#f44c4c"/><circle cx="839.500" cy="384.600" r="10.400" fill="#fff" stroke="#f44c4c" stroke-width="3.200"/></svg>
<div class="t" style="left:844px;top:492.69px;font-size:10.7px;color:#111;">Ragam <b class="sq">Fasilitasi</b><b> Program BIPA</b>:</div>
<div class="t" style="left:844.5px;top:505.69px;font-size:10.7px;color:#111;">1.</div>
<div class="t" style="left:860.5px;top:505.69px;font-size:10.7px;color:#111;"><span class="sq">Penyediaan</span> <b class="sq">pengajar</b> BIPA</div>
<div class="t" style="left:860.5px;top:518.40px;font-size:10px;color:#111;">a. <span class="sq">Pengiriman pengajar ahli/tamu dari</span> Indonesia</div>
<div class="t" style="left:860.5px;top:530.30px;font-size:10px;color:#111;">b. <span class="sq">Penugasan pengajar lokal</span></div>
<div class="t" style="left:860.5px;top:542.10px;font-size:10px;color:#111;">c. <span class="sq">Pengajaran daring</span></div>
<div class="t" style="left:844.5px;top:553.93px;font-size:10.7px;color:#111;">2.</div>
<div class="t" style="left:860.5px;top:553.93px;font-size:10.7px;color:#111;"><span class="sq">Penyediaan</span> <b class="sq">standar</b> dan <b class="sq">bahan</b></div>
<div class="t" style="left:860.5px;top:566.98px;font-size:10.7px;color:#111;"><b class="sq">pembelajaran</b> BIPA</div>
<div class="t" style="left:844.5px;top:579.68px;font-size:10.7px;color:#111;">3.</div>
<div class="t" style="left:860.5px;top:579.68px;font-size:10.7px;color:#111;"><span class="sq">Penyelenggaraan</span> <b class="sq">forum ilmiah</b> BIPA</div>
<div class="t" style="left:844.5px;top:592.38px;font-size:10.7px;color:#111;">4.</div>
<div class="t" style="left:860.5px;top:592.38px;font-size:10.7px;color:#111;"><span class="sq">Penyelenggaraan</span> <b class="sq">apresiasi</b> dan <b class="sq">kompetisi</b></div>
<div class="t" style="left:860.5px;top:605.38px;font-size:10.7px;color:#111;">BIPA</div>
<div class="abs" style="left:357.500px;top:477.500px;width:24.500px;height:70.500px;background:#c00000"></div>
<div class="abs" style="left:357.500px;top:549.500px;width:24.500px;height:70.500px;background:#0070c0"></div>
<div class="t" style="left:339.750px;top:506.250px;width:60px;height:13px;line-height:13px;text-align:center;font-size:10.900px;font-weight:bold;color:#fff;transform:rotate(-90deg)">2021—2024</div>
<div class="t" style="left:339.750px;top:578.250px;width:60px;height:13px;line-height:13px;text-align:center;font-size:10.900px;font-weight:bold;color:#fff;transform:rotate(-90deg)">2015—2020</div>
<div class="abs" style="left:381.8px;top:511px;width:66.19999999999999px;height:37px;background:rgba(255,255,255,.9);border:1px solid #f9cdb0"></div>
<div class="abs" style="left:447.6px;top:480.7px;width:88.39999999999998px;height:67.30000000000001px;background:rgba(255,255,255,.9);border:1px solid #f9cdb0"></div>
<div class="abs" style="left:535.7px;top:501.8px;width:63.5px;height:46.19999999999999px;background:rgba(255,255,255,.9);border:1px solid #f9cdb0"></div>
<div class="abs" style="left:598.9px;top:480.7px;width:79.10000000000002px;height:67.30000000000001px;background:rgba(255,255,255,.9);border:1px solid #f9cdb0"></div>
<div class="abs" style="left:381.8px;top:549.6px;width:66.19999999999999px;height:27.899999999999977px;background:rgba(255,255,255,.9);border:1px solid #bcdcf3"></div>
<div class="abs" style="left:447.6px;top:549.6px;width:88.39999999999998px;height:68.0px;background:rgba(255,255,255,.9);border:1px solid #bcdcf3"></div>
<div class="abs" style="left:535.7px;top:549.6px;width:63.5px;height:28.199999999999932px;background:rgba(255,255,255,.9);border:1px solid #bcdcf3"></div>
<div class="abs" style="left:598.9px;top:549.6px;width:79.39999999999998px;height:57.39999999999998px;background:rgba(255,255,255,.9);border:1px solid #bcdcf3"></div>
<div class="abs" style="left:678px;top:549.6px;width:85px;height:66.10000000000002px;background:rgba(255,255,255,.9);border:1px solid #bcdcf3"></div>
<div class="t" style="left:387px;top:517.30px;font-size:8.0px;color:#c00000;font-weight:bold;">Amerika (3)</div><div class="t" style="left:387px;top:527.65px;font-size:8.0px;color:#c4161c;">Meksiko, Brazil</div><div class="t" style="left:387px;top:537.60px;font-size:8.0px;color:#c4161c;">Argentina</div>
<div class="t" style="left:453px;top:487.40px;font-size:8.0px;color:#c00000;font-weight:bold;">Eropa (10)</div><div class="t" style="left:453px;top:497.40px;font-size:8.0px;color:#c4161c;">Swiss, Turki,</div><div class="t" style="left:453px;top:507.00px;font-size:8.0px;color:#c4161c;">Belanda,&nbsp; Spanyol,</div><div class="t" style="left:453px;top:516.60px;font-size:8.0px;color:#c4161c;">Norwegia, Denmark,</div><div class="t" style="left:453px;top:526.40px;font-size:8.0px;color:#c4161c;">Portugal, Ukraina,</div><div class="t" style="left:453px;top:536.10px;font-size:8.0px;color:#c4161c;">Azerbaijan, Hongaria</div>
<div class="t" style="left:542.2px;top:508.40px;font-size:8.0px;color:#c00000;font-weight:bold;">Afrika (3)</div><div class="t" style="left:542.2px;top:518.10px;font-size:8.0px;color:#c4161c;">Afsel,</div><div class="t" style="left:542.2px;top:528.00px;font-size:8.0px;color:#c4161c;">Tanzania,</div><div class="t" style="left:542.2px;top:537.60px;font-size:8.0px;color:#c4161c;">Maroko</div>
<div class="t" style="left:604.6px;top:487.40px;font-size:8.0px;color:#c00000;font-weight:bold;">Aspas (7)</div><div class="t" style="left:604.6px;top:497.40px;font-size:8.0px;color:#c4161c;">Qatar, Arab Saudi,</div><div class="t" style="left:604.6px;top:507.00px;font-size:8.0px;color:#c4161c;">Korea Selatan,</div><div class="t" style="left:604.6px;top:516.60px;font-size:8.0px;color:#c4161c;">Kazakhstan,</div><div class="t" style="left:604.6px;top:526.40px;font-size:8.0px;color:#c4161c;">Pakistan, Selandia</div><div class="t" style="left:604.6px;top:536.10px;font-size:8.0px;color:#c4161c;">Baru, Fiji</div>
<div class="t" style="left:387px;top:556.80px;font-size:8.0px;color:#1f4e79;font-weight:bold;">Amerika (2)</div><div class="t" style="left:387px;top:566.70px;font-size:8.0px;color:#0a74c4;">AS, Suriname</div>
<div class="t" style="left:453px;top:556.80px;font-size:8.0px;color:#1f4e79;font-weight:bold;">Eropa (10)</div><div class="t" style="left:453px;top:566.70px;font-size:8.0px;color:#0a74c4;">Austria, Bulgaria,</div><div class="t" style="left:453px;top:576.30px;font-size:8.0px;color:#0a74c4;">Finlandia, Inggris,</div><div class="t" style="left:453px;top:585.80px;font-size:8.0px;color:#0a74c4;">Italia, Jerman,</div><div class="t" style="left:453px;top:595.40px;font-size:8.0px;color:#0a74c4;">Polandia, Prancis,</div><div class="t" style="left:453px;top:605.00px;font-size:8.0px;color:#0a74c4;">Rusia, Yunani</div>
<div class="t" style="left:542.2px;top:556.80px;font-size:8.0px;color:#1f4e79;font-weight:bold;">Afrika (2)</div><div class="t" style="left:542.2px;top:566.70px;font-size:8.0px;color:#0a74c4;">Mesir, Tunisia</div>
<div class="t" style="left:604.6px;top:556.80px;font-size:8.0px;color:#1f4e79;font-weight:bold;">Aspas (7)</div><div class="t" style="left:604.6px;top:566.70px;font-size:8.0px;color:#0a74c4;">Australia, India,</div><div class="t" style="left:604.6px;top:576.30px;font-size:8.0px;color:#0a74c4;">Jepang, Tiongkok,</div><div class="t" style="left:604.6px;top:585.80px;font-size:8.0px;color:#0a74c4;">UEA, Uzbekistan,</div><div class="t" style="left:604.6px;top:595.40px;font-size:8.0px;color:#0a74c4;">PNG</div>
<div class="t" style="left:683.8px;top:556.80px;font-size:8.0px;color:#1f4e79;font-weight:bold;">Astara (9)</div><div class="t" style="left:683.8px;top:566.70px;font-size:8.0px;color:#0a74c4;">Malaysia, Myanmar,</div><div class="t" style="left:683.8px;top:576.30px;font-size:8.0px;color:#0a74c4;">Filipina, Kamboja,</div><div class="t" style="left:683.8px;top:585.80px;font-size:8.0px;color:#0a74c4;">Laos, Singapura,</div><div class="t" style="left:683.8px;top:595.40px;font-size:8.0px;color:#0a74c4;">Thailand, Vietnam,</div><div class="t" style="left:683.8px;top:605.00px;font-size:8.0px;color:#0a74c4;">Timor Leste</div>
<div class="abs" style="left:354px;top:620.300px;width:734px;height:30.700px;background:#2d4f9e"></div>
<div class="t" style="left:373.7px;top:632.25px;font-size:7px;color:#e8edf7;">Gelar Wicara BIPA KJRI Dubai</div>
<div class="t" style="left:892.6px;top:629.13px;font-size:6.15px;color:#e8edf7;">Kementerian Pendidikan, Kebudayaan,</div>
<div class="t" style="left:892.6px;top:636.23px;font-size:6.15px;color:#e8edf7;">Riset, dan Teknologi</div>
<svg class="abs" style="left:861px;top:624px" width="24" height="24" viewBox="0 0 24 24"><circle cx="12" cy="11.500" r="10.800" fill="#2b9bd8" stroke="#dfeaf5" stroke-width=".9"/><path d="M12 4 L14 7.500 L12 19 L10 7.500Z" fill="#fff"/><path d="M5 9 Q8.500 8 11 10 L11 16 Q8 14.500 5 15.500Z M19 9 Q15.500 8 13 10 L13 16 Q16 14.500 19 15.500Z" fill="#fff"/><path d="M7 18 Q12 21 17 18" fill="none" stroke="#fff" stroke-width="1"/></svg>
<svg class="abs" style="left:740px;top:510px" width="110" height="115" viewBox="0 0 689 720">
<!-- flag -->
<g transform="rotate(22 45 205)"><rect x="8" y="180" width="72" height="22" fill="#e0344a"/><rect x="8" y="202" width="72" height="20" fill="#fff"/><rect x="78" y="178" width="6" height="85" fill="#555"/></g>
<!-- woman 1 -->
<path d="M160 275 L70 250 L62 268 L150 310Z" fill="#b79a85"/>
<circle cx="66" cy="258" r="11" fill="#f6c48a"/>
<path d="M170 380 L260 380 L262 500 L175 500Z" fill="#7b2a35"/>
<path d="M150 100 Q220 70 285 105 Q300 180 285 235 L155 235 Q140 170 150 100Z" fill="#1a1a1a"/>
<circle cx="225" cy="178" r="40" fill="#f6c48a"/>
<path d="M180 160 Q200 115 268 150 Q250 125 222 128 Q195 130 180 160Z" fill="#1a1a1a"/>
<path d="M205 195 Q225 212 246 195" fill="#fff" stroke="#c0504d" stroke-width="4"/>
<path d="M175 228 L280 228 L292 300 L285 395 L160 395 L150 300Z" fill="#b79a85"/>
<path d="M205 228 L250 228 L245 330 L210 330Z" fill="#fff"/>
<rect x="190" y="278" width="72" height="92" rx="4" fill="#7a2b2b" transform="rotate(-8 226 324)"/>
<rect x="203" y="290" width="40" height="14" fill="#e9d9c9" transform="rotate(-8 226 324)"/>
<circle cx="243" cy="258" r="7" fill="#2c5fa8"/>
<!-- woman 2 hijab -->
<path d="M292 350 L420 350 L425 570 L288 570Z" fill="#5c4b7a"/>
<path d="M275 290 L430 290 L428 420 L380 400 L330 420 L262 415Z" fill="#8b2346"/>
<path d="M310 130 Q330 90 380 100 Q435 115 438 200 Q440 260 420 290 L330 295 Q295 260 305 200Z" fill="#f0955a"/>
<ellipse cx="347" cy="168" rx="33" ry="40" fill="#f6c48a"/>
<path d="M328 190 Q345 205 362 188" fill="none" stroke="#c0504d" stroke-width="5"/>
<path d="M325 150 h14 M355 150 h14" stroke="#333" stroke-width="4"/>
<circle cx="362" cy="290" r="6" fill="#2c5fa8"/>
<path d="M262 405 L330 380 L345 400 L275 430Z" fill="#8b2346"/><circle cx="335" cy="393" r="12" fill="#f6c48a"/>
<!-- man -->
<path d="M442 410 L577 410 L575 620 L520 620 L512 470 L500 620 L445 620Z" fill="#2e4a5a"/>
<path d="M430 225 Q500 195 575 225 L620 400 L592 415 L575 340 L578 412 L440 412 L438 300 L425 260Z" fill="#a9cde0"/>
<path d="M484 222 L508 222 L512 370 L495 392 L478 370Z" fill="#2f4858"/>
<circle cx="522" cy="263" r="7" fill="#2c5fa8"/>
<ellipse cx="500" cy="145" rx="52" ry="58" fill="#f6c48a"/>
<path d="M428 70 Q480 40 565 75 Q580 110 565 150 Q560 105 530 95 Q480 90 445 105 Q440 130 440 150 Q420 110 428 70Z" fill="#1a1a1a"/>
<path d="M478 168 Q500 200 524 168Z" fill="#e33"/>
<path d="M462 132 q10 -10 20 0 M515 132 q10 -10 20 0" fill="none" stroke="#333" stroke-width="4"/>
<circle cx="604" cy="425" r="14" fill="#f6c48a"/>
<!-- suitcases -->
<path d="M228 490 V425 H290 V490" fill="none" stroke="#b8aaa3" stroke-width="9"/>
<rect x="172" y="482" width="183" height="215" rx="14" fill="#9c8880"/>
<rect x="225" y="530" width="110" height="12" rx="5" fill="#b8aaa3"/><rect x="225" y="585" width="110" height="12" rx="5" fill="#b8aaa3"/>
<path d="M425 570 Q450 545 475 570" fill="none" stroke="#8a6a4a" stroke-width="9"/>
<rect x="347" y="566" width="213" height="131" rx="12" fill="#f0a030"/>
<rect x="385" y="566" width="16" height="131" fill="#8a6a4a"/><rect x="470" y="566" width="16" height="131" fill="#8a6a4a"/>
</svg>
</div></div><!--TH6E--></div>
  <svg class="abs" style="left:203.500px;top:600px" width="9" height="14" viewBox="0 0 9 14"><path d="M.7 .8 V11 L3.200 8.700 L5 12.800 L6.700 12 L4.900 8 H8.200Z" fill="#fff" stroke="#111" stroke-width=".8"/></svg>

  </div>
</div>

<!-- ===== zoom toolbar ===== -->
<div id="ztb" class="abs">
  <!-- unmute -->
  <svg class="abs" style="left:24px;top:3px" width="15" height="17" viewBox="0 0 15 17"><rect x="5.200" y="1" width="4.600" height="8.500" rx="2.300" fill="#bdbdbd"/><path d="M3 7.500 Q3 11.800 7.500 11.800 Q12 11.800 12 7.500 M7.500 11.800 V14.500 M5 14.800 H10" fill="none" stroke="#bdbdbd" stroke-width="1"/><path d="M1.500 15.500 L13.500 1" stroke="#e8433f" stroke-width="1.200"/></svg>
  <div class="zl" style="left:16px;width:29px">Unmute</div>
  <svg class="abs" style="left:48.5px;top:9px" width="6" height="4" viewBox="0 0 6 4"><path d="M.7 3.300 L3 .9 L5.300 3.300" fill="none" stroke="#bbb" stroke-width=".9"/></svg>
  <!-- start video -->
  <svg class="abs" style="left:84px;top:4px" width="19" height="15" viewBox="0 0 19 15"><rect x="1" y="3.500" width="11" height="8.500" rx="1.800" fill="#bdbdbd"/><path d="M12.500 6.800 L17.500 3.800 V11.700 L12.500 8.700Z" fill="#bdbdbd"/><path d="M1.500 14 L15.500 .8" stroke="#e8433f" stroke-width="1.200"/></svg>
  <div class="zl" style="left:72.500px;width:40px">Start Video</div>
  <svg class="abs" style="left:114px;top:9px" width="6" height="4" viewBox="0 0 6 4"><path d="M.7 3.300 L3 .9 L5.300 3.300" fill="none" stroke="#bbb" stroke-width=".9"/></svg>
  <!-- participants -->
  <svg class="abs" style="left:548.500px;top:5px" width="18" height="12" viewBox="0 0 18 12"><circle cx="5.500" cy="3" r="2.600" fill="#bdbdbd"/><path d="M.5 11.500 Q.5 6.500 5.500 6.500 Q10.500 6.500 10.500 11.500Z" fill="#bdbdbd"/><circle cx="12.300" cy="3.300" r="2.300" fill="#bdbdbd"/><path d="M11.300 11.500 Q11.500 8 9.800 6.900 Q16.800 5.600 17 11.500Z" fill="#bdbdbd"/></svg>
  <div class="t" style="left:567.500px;top:6.500px;font-size:7.500px;color:#d0d0d0;letter-spacing:-.2px">53</div>
  <div class="zl" style="left:536px;width:42px">Participants</div>
  <svg class="abs" style="left:588.5px;top:9px" width="6" height="4" viewBox="0 0 6 4"><path d="M.7 3.300 L3 .9 L5.300 3.300" fill="none" stroke="#bbb" stroke-width=".9"/></svg>
  <!-- chat -->
  <svg class="abs" style="left:619.500px;top:4px" width="14" height="13" viewBox="0 0 14 13"><path d="M2.500 .8 H11.500 Q13.300 .8 13.300 2.600 V7.500 Q13.300 9.300 11.500 9.300 H6.500 L3.500 12.200 V9.300 H2.500 Q.7 9.300 .7 7.500 V2.600 Q.7 .8 2.500 .8Z" fill="#bdbdbd"/></svg>
  <div class="zl" style="left:618px;width:17px">Chat</div>
  <!-- share screen -->
  <div class="abs" style="left:679px;top:6px;width:14.500px;height:11px;background:#23d959;border-radius:2.500px"></div>
  <svg class="abs" style="left:682.500px;top:8px" width="8" height="8" viewBox="0 0 8 8"><path d="M4 7 V1.500 M1.500 4 L4 1.300 L6.500 4" fill="none" stroke="#0d2a14" stroke-width="1.300"/></svg>
  <div class="zl" style="left:662px;width:47px;color:#23d959">Share Screen</div>
  <!-- record -->
  <svg class="abs" style="left:738px;top:4px" width="14" height="14" viewBox="0 0 14 14"><circle cx="7" cy="7" r="6" fill="none" stroke="#bdbdbd" stroke-width="1"/><circle cx="7" cy="7" r="3.800" fill="#bdbdbd"/></svg>
  <div class="zl" style="left:732px;width:26px">Record</div>
  <!-- reactions -->
  <svg class="abs" style="left:791px;top:2.500px" width="17" height="16" viewBox="0 0 17 16"><circle cx="7" cy="9" r="5.800" fill="#bdbdbd"/><circle cx="5" cy="7.500" r=".9" fill="#1a1a1a"/><circle cx="9" cy="7.500" r=".9" fill="#1a1a1a"/><path d="M4.200 10.500 Q7 13 9.800 10.500" fill="none" stroke="#1a1a1a" stroke-width=".9"/><path d="M13.500 .8 V5.200 M11.300 3 H15.700" stroke="#bdbdbd" stroke-width="1"/></svg>
  <div class="zl" style="left:781px;width:35px">Reactions</div>
  <!-- leave -->
  <div class="abs" style="left:1231px;top:9.500px;width:41px;height:16.500px;background:#c6262e;border-radius:4px"></div>
  <div class="t" style="left:1240.500px;top:14px;font-size:8px;font-weight:bold;color:#fff;letter-spacing:-.3px">Leave</div>
</div>

<!-- LIVE overlay (on top of ppt) -->
<div class="abs" style="left:83px;top:103px;width:28px;height:17px;background:#e8393f;border-radius:2px 0 0 2px"></div>
<div class="t" style="left:88.500px;top:107px;font-size:8.800px;font-weight:bold;color:#fff;letter-spacing:-.35px">LIVE</div>
<div class="abs" style="left:111px;top:103px;width:142px;height:17px;background:rgba(65,65,65,.66);border-radius:0 2px 2px 0"></div>
<div class="t" style="left:117.500px;top:107.300px;font-size:7.900px;color:#e8e8e8;letter-spacing:-.12px">on Custom Live Streaming Service</div>
<svg class="abs" style="left:244px;top:110px" width="6" height="4" viewBox="0 0 6 4"><path d="M.5 .5 L3 3.500 L5.500 .5Z" fill="#eee"/></svg>


<!-- ===== taskbar ===== -->
<div id="taskbar" class="abs"><svg class="abs" style="left:10.5px;top:8.5px" width="11" height="12" viewBox="0 0 11 12"><g fill="#1f1f1f"><path d="M0 1.600 L4.600 1 V5.600 H0Z"/><path d="M5.400 .9 L11 .1 V5.600 H5.400Z"/><path d="M0 6.400 H4.600 V11 L0 10.400Z"/><path d="M5.400 6.400 H11 V11.900 L5.400 11.100Z"/></g></svg><div class="abs" style="left:33px;top:1px;width:228px;height:26px;background:#fff"></div><svg class="abs" style="left:40px;top:8.5px" width="12" height="12" viewBox="0 0 12 12"><circle cx="7" cy="4.500" r="3.700" fill="none" stroke="#222" stroke-width="1.100"/><path d="M4.300 7.200 L.8 10.700" stroke="#222" stroke-width="1.200"/></svg><div class="t" style="left:59px;top:9.500px;font-size:10px;color:#333;letter-spacing:-.22px">Type here to search</div><svg class="abs" style="left:272px;top:8.5px" width="11" height="11" viewBox="0 0 11 11"><circle cx="5.500" cy="5.500" r="4.300" fill="none" stroke="#222" stroke-width="1.500"/></svg><svg class="abs" style="left:303px;top:8.5px" width="13" height="12" viewBox="0 0 13 12"><rect x="1.500" y="2.500" width="7" height="7" fill="none" stroke="#222" stroke-width="1.100"/><path d="M.5 .8 H9 M.5 11.200 H9 M11.200 .5 V4 M11.200 5.500 V11.500" stroke="#222" stroke-width="1.100"/></svg><div class="abs" style="left:329.5px;top:26px;width:26.5px;height:2px;background:#4f8fd6"></div><svg class="abs" style="left:335px;top:6px" width="16" height="16" viewBox="0 0 16 16"><path d="M.5 2.500 H6 L7.500 4 H15.500 V6 H.5Z" fill="#e8a51c"/><rect x=".5" y="5" width="15" height="9" fill="#fbd260"/><rect x="3" y="8.500" width="10" height="5.500" fill="#3f8fe0"/><rect x="5.500" y="11" width="5" height="3" fill="#fbd260"/></svg><svg class="abs" style="left:367.5px;top:6px" width="16" height="16" viewBox="0 0 16 16"><path d="M5 4 V2.500 Q5 .8 8 .8 Q11 .8 11 2.500 V4" fill="none" stroke="#222" stroke-width="1.100"/><rect x="1" y="4" width="14" height="11" fill="#2a2a2a"/><rect x="5" y="6.500" width="2.600" height="2.600" fill="#f25022"/><rect x="8.400" y="6.500" width="2.600" height="2.600" fill="#7fba00"/><rect x="5" y="9.900" width="2.600" height="2.600" fill="#00a4ef"/><rect x="8.400" y="9.900" width="2.600" height="2.600" fill="#ffb900"/></svg><svg class="abs" style="left:400.5px;top:6px" width="16" height="16" viewBox="0 0 16 16"><g fill="#fafafa" stroke="#ececec" stroke-width=".3"><path d="M4 1 L8 3.500 L4 6 L0 3.500Z"/><path d="M12 1 L16 3.500 L12 6 L8 3.500Z"/><path d="M4 6 L8 8.500 L4 11 L0 8.500Z"/><path d="M12 6 L16 8.500 L12 11 L8 8.500Z"/><path d="M4 12 L8 9.500 L12 12 L8 14.500Z"/></g></svg><svg class="abs" style="left:433px;top:6px" width="17" height="16" viewBox="0 0 17 16"><rect x=".5" y="3" width="16" height="11" fill="#0f78d4"/><path d="M.5 3 L8.500 9.500 L16.500 3Z" fill="#49a6f0"/><path d="M.5 3 L8.500 9.500 L16.500 3" fill="none" stroke="#fff" stroke-width=".9"/></svg><svg class="abs" style="left:466px;top:6px" width="16" height="16" viewBox="0 0 16 16"><defs><linearGradient id="eg" x1="0" y1="0" x2="1" y2="1"><stop offset="0" stop-color="#35c1b0"/><stop offset=".5" stop-color="#1a8fd6"/><stop offset="1" stop-color="#0c59a4"/></linearGradient></defs><circle cx="8" cy="8" r="7.500" fill="url(#eg)"/><path d="M3 9 Q3.500 4.500 8.500 4.500 Q13 4.800 13.500 8.500 H7 Q7 12 11 12.500 Q6 14.500 3.800 11Z" fill="#e8f6ff" opacity=".85"/></svg><svg class="abs" style="left:498.5px;top:6px" width="16" height="16" viewBox="0 0 16 16"><circle cx="8" cy="8" r="6.500" fill="none" stroke="#8a8a8a" stroke-width="2.600"/><path d="M8 1.500 A6.500 6.500 0 0 1 14.500 8" fill="none" stroke="#e8503a" stroke-width="2.600"/><circle cx="8" cy="8" r="2.200" fill="#d9d9d9"/></svg><svg class="abs" style="left:531px;top:6px" width="16" height="16" viewBox="0 0 16 16"><circle cx="9" cy="10" r="5.500" fill="#8a6a2a"/><circle cx="5" cy="5" r="3" fill="#e8503a"/><path d="M3 8 L13 4 L12 8Z" fill="#4a9a3a"/><circle cx="10" cy="9" r="2" fill="#e8c86a"/></svg><svg class="abs" style="left:564px;top:6px" width="16" height="16" viewBox="0 0 16 16"><rect x=".5" y=".5" width="15" height="15" rx="1.500" fill="#7a2a8a"/><circle cx="7.500" cy="7" r="3.600" fill="none" stroke="#fff" stroke-width="1.600"/><path d="M7.500 7 H11.500" stroke="#fff" stroke-width="1.400"/><path d="M4 12.500 H12" stroke="#e9c9f0" stroke-width="1.200"/><path d="M12 .5 H15.500 V4Z" fill="#fff"/></svg><div class="abs" style="left:590.5px;top:26px;width:28.0px;height:2px;background:#4f8fd6"></div><svg class="abs" style="left:596.5px;top:6px" width="16" height="16" viewBox="0 0 16 16"><rect x="5" y="1" width="11" height="14" rx="1" fill="#41a5ee"/><rect x="5" y="8" width="11" height="7" fill="#185abd"/><rect x="5" y="4.500" width="11" height="3.500" fill="#2b7cd3"/><rect x="0" y="3.500" width="9.500" height="9" rx="1" fill="#185abd"/><path d="M1.800 5.800 L3 10.300 L4.700 6.500 L6.400 10.300 L7.700 5.800" fill="none" stroke="#fff" stroke-width="1"/></svg><svg class="abs" style="left:629px;top:6px" width="16" height="16" viewBox="0 0 16 16"><rect x="5" y="1" width="11" height="14" rx="1" fill="#21a366"/><rect x="5" y="8" width="11" height="7" fill="#107c41"/><rect x="10.500" y="1" width="5.500" height="7" fill="#33c481"/><rect x="0" y="3.500" width="9.500" height="9" rx="1" fill="#107c41"/><path d="M2.500 5.800 L7 10.300 M7 5.800 L2.500 10.300" stroke="#fff" stroke-width="1.100"/></svg><svg class="abs" style="left:661px;top:6px" width="16" height="16" viewBox="0 0 16 16"><path d="M8 8 Q5.500 4.500 3.500 5 Q1 5.500 1 8 Q1 10.500 3.500 11 Q5.500 11.500 8 8 Q10.500 4.500 12.500 5 Q15 5.500 15 8 Q15 10.500 12.500 11 Q10.500 11.500 8 8Z" fill="none" stroke="#6ab8c8" stroke-width="1.500"/></svg><svg class="abs" style="left:695px;top:6px" width="16" height="16" viewBox="0 0 16 16"><rect x=".5" y="2" width="15" height="11" rx="1" fill="#4a9be0" stroke="#8ab" stroke-width=".6"/><rect x="2" y="3.500" width="7" height="5" fill="#d9ecfb"/><circle cx="11.500" cy="6" r="2" fill="#7fd07a"/><rect x="2.500" y="10" width="11" height="1.500" fill="#cde"/></svg><svg class="abs" style="left:727.5px;top:6px" width="16" height="16" viewBox="0 0 16 16"><rect x=".5" y=".5" width="15" height="15" rx="2" fill="#f7c81a"/><circle cx="8" cy="6" r="3.500" fill="#fff"/><path d="M7 4.300 L10 6 L7 7.700Z" fill="#f7a81a"/><path d="M3 12.500 H13" stroke="#6a4a0a" stroke-width="1.600"/></svg><div class="abs" style="left:755.5px;top:26px;width:25.5px;height:2px;background:#4f8fd6"></div><svg class="abs" style="left:759.5px;top:6px" width="16" height="16" viewBox="0 0 16 16"><circle cx="8" cy="8" r="7.500" fill="#e33b2e"/><path d="M8 8 L1.500 4.300 A7.500 7.500 0 0 0 8 15.500 L11.500 9.500Z" fill="#2da94f"/><path d="M8 8 L11.500 9.500 L8 15.500 A7.500 7.500 0 0 0 14.800 4.800 H8Z" fill="#fbc116"/><circle cx="8" cy="8" r="3.400" fill="#fff"/><circle cx="8" cy="8" r="2.600" fill="#4285f4"/></svg><svg class="abs" style="left:792px;top:6px" width="16" height="16" viewBox="0 0 16 16"><path d="M8 .8 A7 7 0 0 1 8 14.800 Q6 14.800 4.500 14 L1 15 L2 11.600 A7 7 0 0 1 8 .8Z" fill="#2bb741"/><path d="M5.500 4.500 Q4.500 6 6.500 8.500 Q9 11 10.800 10.200 L11.200 9 L9.600 8.200 L8.900 8.900 Q7.500 8.300 6.900 6.900 L7.500 6.200 L6.700 4.500Z" fill="#fff"/></svg><svg class="abs" style="left:825px;top:6px" width="16" height="16" viewBox="0 0 16 16"><path d="M4 1.500 L15 2.500 L12 14.500 L1 13.500Z" fill="#d6e6f2" stroke="#9ab" stroke-width=".5"/><path d="M4.500 4.500 L13 5.300 M4 7 L12.500 7.800 M3.400 9.500 L11.800 10.300" stroke="#9cb4c8" stroke-width=".7"/><path d="M4 1.500 L15 2.500 L14.500 4 L3.600 3Z" fill="#8cb4d6"/></svg><svg class="abs" style="left:859.5px;top:6px" width="17" height="16" viewBox="0 0 17 16"><path d="M13.500 3.500 A6.500 6.500 0 1 0 14 11.500 L11 10 A3.500 3.500 0 1 1 10.800 5Z" fill="#d8352a"/><path d="M1 13 L9 7 L11 9 L4 15.500Z" fill="#e8c070"/><path d="M9 7 L14 1 L15.500 2.500 L11 9Z" fill="#4a6a9a"/></svg><div class="abs" style="left:884.5px;top:26px;width:27.5px;height:2px;background:#4f8fd6"></div><svg class="abs" style="left:891px;top:6px" width="16" height="16" viewBox="0 0 16 16"><defs><radialGradient id="fg" cx=".6" cy=".3" r=".8"><stop offset="0" stop-color="#ffde3a"/><stop offset=".5" stop-color="#ff8a16"/><stop offset="1" stop-color="#e8305a"/></radialGradient></defs><circle cx="8" cy="8.500" r="7.300" fill="url(#fg)"/><circle cx="8.500" cy="8.500" r="3.600" fill="#7a3ad6"/><path d="M3 4 Q6 3.500 7.500 5.500 Q5.500 6.500 5.500 9 Q5.500 12 9 12.500 Q5 14 2.500 10.500 Q1.200 7 3 4Z" fill="#ff9a1a"/></svg><div class="abs" style="left:915px;top:0;width:32.500px;height:28px;background:#f6f6f6"></div><div class="abs" style="left:915px;top:26px;width:32.5px;height:2px;background:#4f8fd6"></div><svg class="abs" style="left:924px;top:6px" width="16" height="16" viewBox="0 0 16 16"><rect x=".5" y=".5" width="15" height="15" rx="4" fill="#4a8cff"/><rect x="3" y="5.200" width="6.800" height="5.600" rx="1.300" fill="#fff"/><path d="M10.400 7.300 L13.200 5.500 V10.500 L10.400 8.700Z" fill="#fff"/></svg><svg class="abs" style="left:956.5px;top:6.5px" width="15" height="15" viewBox="0 0 15 15"><g fill="none" stroke="#2a2a2a"><circle cx="7.500" cy="7.500" r="4" stroke-width="2.200"/><path d="M7.500 .8 V3 M7.500 12 V14.200 M.8 7.500 H3 M12 7.500 H14.200 M2.800 2.800 L4.300 4.300 M10.700 10.700 L12.200 12.200 M2.800 12.200 L4.300 10.700 M10.700 4.300 L12.200 2.800" stroke-width="2"/></g><circle cx="7.500" cy="7.500" r="1.800" fill="#e3e3e3"/></svg><svg class="abs" style="left:988.5px;top:6px" width="16" height="16" viewBox="0 0 16 16"><circle cx="8" cy="8" r="7.600" fill="#3a2a2a"/><circle cx="8" cy="8" r="6" fill="none" stroke="#c8503a" stroke-width="1.600"/><circle cx="8" cy="8" r="2.600" fill="#e8e0d8"/><circle cx="8" cy="8" r="1" fill="#222"/></svg><div class="abs" style="left:1015.5px;top:26px;width:27.0px;height:2px;background:#4f8fd6"></div><svg class="abs" style="left:1020.5px;top:6px" width="17" height="16" viewBox="0 0 17 16"><rect x=".5" y=".5" width="16" height="15" fill="#1c6fd0"/><path d="M.5 15.500 L7 7 L11 12 L13 10 L16.500 15.500Z" fill="#0a3a8a"/><path d="M.5 15.500 L7 7 L12 15.500Z" fill="#2a9af0"/><circle cx="12.500" cy="4.500" r="1.600" fill="#fff"/></svg><svg class="abs" style="left:1113px;top:10px" width="10" height="9" viewBox="0 0 10 9"><path d="M1 6.500 L5 2.500 L9 6.500" fill="none" stroke="#222" stroke-width="1.100"/></svg><svg class="abs" style="left:1130px;top:7px" width="11" height="13" viewBox="0 0 11 13"><rect x="1.500" y="2" width="6" height="9" rx="1.500" fill="none" stroke="#333" stroke-width=".9"/><rect x="3" y="4.500" width="3" height="3" fill="#333"/><path d="M8.500 5 h1.500 v3 h-1.500" fill="none" stroke="#333" stroke-width=".8"/></svg><svg class="abs" style="left:1144px;top:8px" width="12" height="12" viewBox="0 0 12 12"><path d="M1 4.500 H3 L5.500 2 V10 L3 7.500 H1Z" fill="none" stroke="#333" stroke-width=".9"/><path d="M7 4 Q8.300 6 7 8 M8.800 2.800 Q10.800 6 8.800 9.200" fill="none" stroke="#333" stroke-width=".8"/></svg><svg class="abs" style="left:1161px;top:8.5px" width="10" height="11" viewBox="0 0 10 11"><path d="M1 9 Q1.500 2 9 1.500" fill="none" stroke="#555" stroke-width=".8"/><path d="M3.500 9.500 Q4 4.500 9 4" fill="none" stroke="#555" stroke-width=".8"/><path d="M6 10 Q6.300 7 9 6.700" fill="none" stroke="#555" stroke-width=".8"/><circle cx="8.500" cy="9.500" r=".9" fill="#555"/></svg><div class="t" style="left:1178.500px;top:10.500px;font-size:7.600px;color:#222;letter-spacing:-.3px">ENG</div><div class="t" style="left:1200px;width:43px;text-align:center;top:4.800px;font-size:7.600px;color:#222;letter-spacing:-.3px">14:50</div><div class="t" style="left:1200px;width:43px;text-align:center;top:16.600px;font-size:7.600px;color:#222;letter-spacing:-.3px">27/05/2021</div><svg class="abs" style="left:1252.5px;top:6px" width="16" height="16" viewBox="0 0 16 16"><path d="M1 1 H12 V9.500 H6 L3.500 12 V9.500 H1Z" fill="#222"/><path d="M3 3.500 H10 M3 5.500 H10 M3 7.300 H8" stroke="#e3e3e3" stroke-width=".7"/><circle cx="12" cy="11.500" r="3.600" fill="#e3e3e3" stroke="#222" stroke-width=".7"/><text x="12" y="13.700" font-family="Liberation Sans" font-size="5.800" font-weight="bold" text-anchor="middle" fill="#222">4</text></svg></div>

</div>
</body>
</html>
